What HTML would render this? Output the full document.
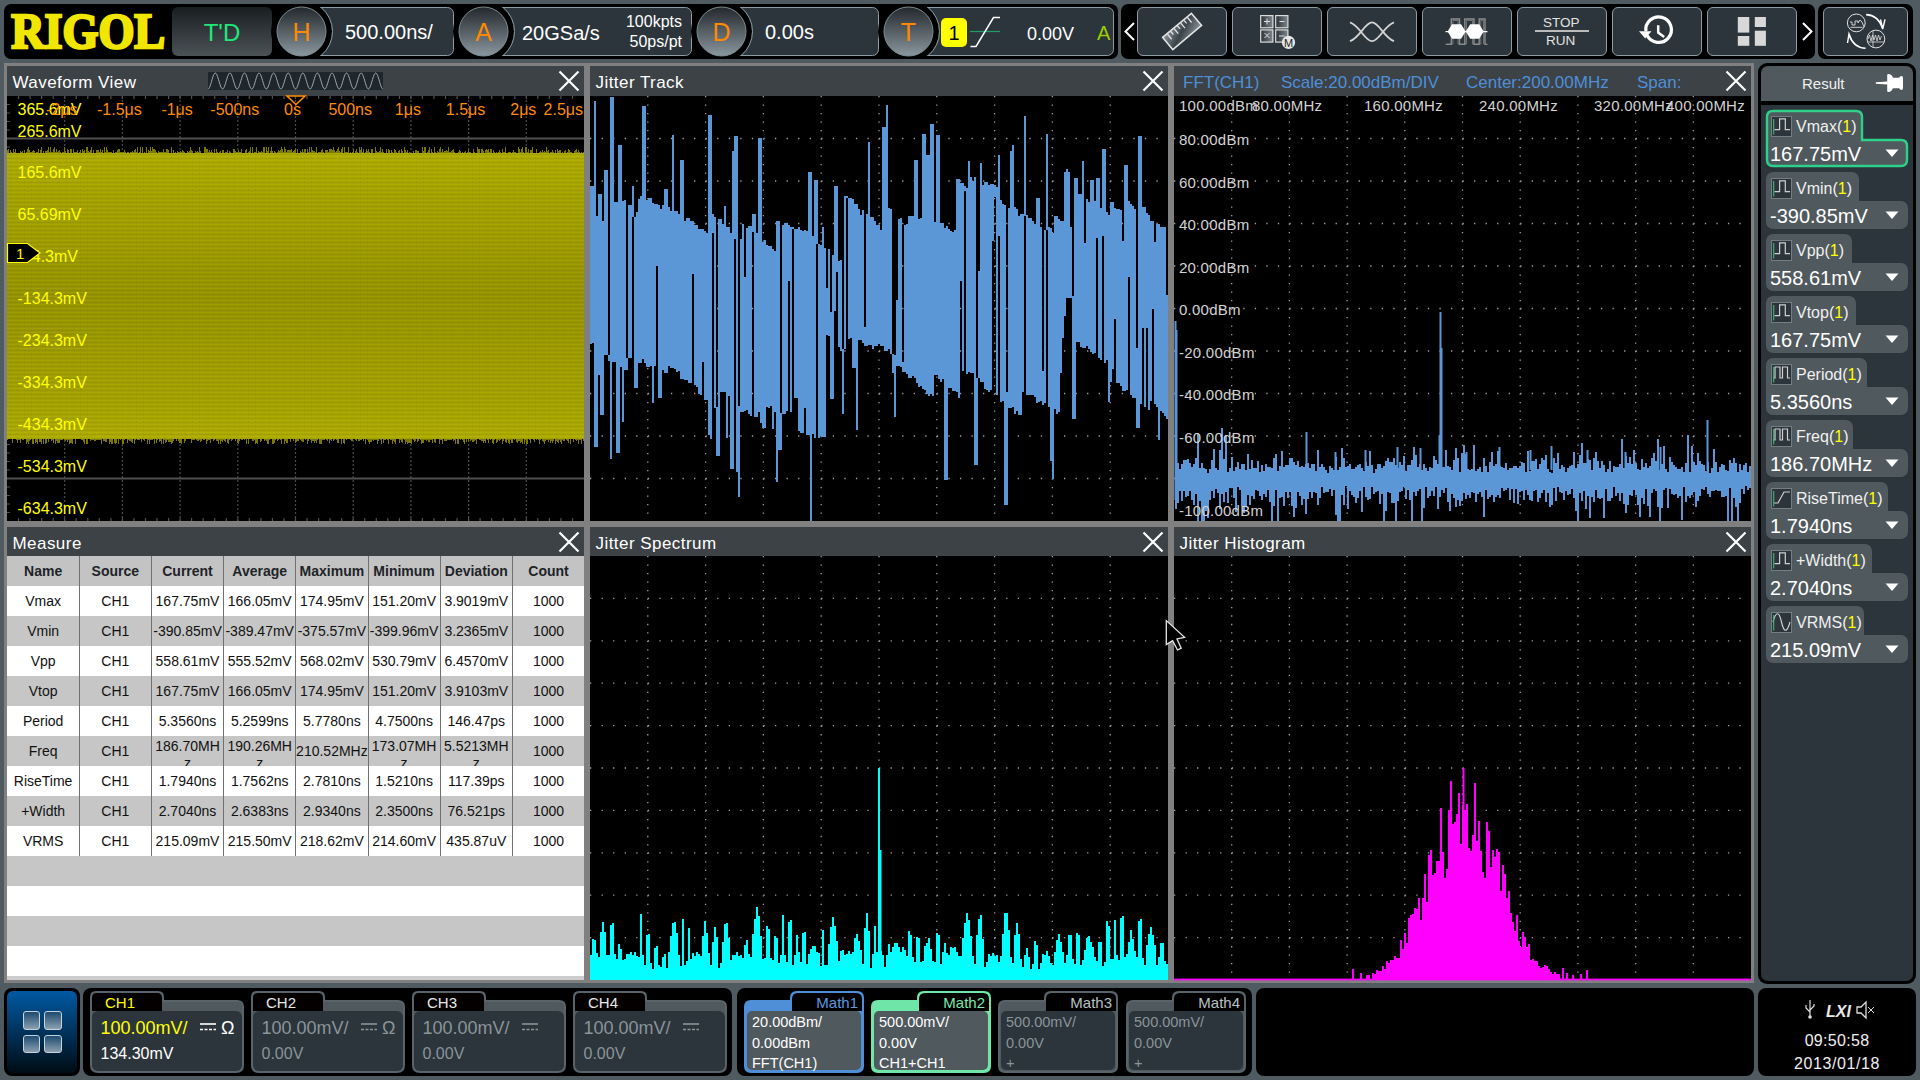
<!DOCTYPE html><html><head><meta charset="utf-8"><style>
*{margin:0;padding:0;box-sizing:border-box}
html,body{width:1920px;height:1080px;overflow:hidden;background:#4f5b61;font-family:"Liberation Sans",sans-serif;color:#fff}
.a{position:absolute}
.t{position:absolute;white-space:nowrap;line-height:1}
svg{position:absolute;overflow:visible}
</style></head><body>
<div class="a" style="left:4px;top:4px;width:1114px;height:55px;background:#000;border-radius:7px"></div>
<div class="a" style="left:1121px;top:4px;width:694px;height:55px;background:#000;border-radius:7px"></div>
<div class="a" style="left:1818px;top:4px;width:95px;height:55px;background:#000;border-radius:7px"></div>
<svg style="left:0;top:0" width="180" height="60"><text x="11.2" y="47.9" font-family="Liberation Serif" font-weight="bold" font-size="49.6" fill="#f0e600" stroke="#f0e600" stroke-width="2.6" stroke-linejoin="miter" textLength="154" lengthAdjust="spacingAndGlyphs">RIGOL</text></svg>
<div class="a" style="left:172px;top:7px;width:100px;height:49px;background:linear-gradient(#191d20,#4b5357);border-radius:6px"></div>
<div class="t" style="left:-78px;width:600px;text-align:center;top:20.7px;font-size:24px;color:#1ee87a;">T'D</div>
<svg style="left:0;top:0" width="1120" height="60">
<defs><linearGradient id="cg" x1="0" y1="0" x2="0" y2="1"><stop offset="0" stop-color="#23282c"/><stop offset="1" stop-color="#8a979e"/></linearGradient><clipPath id="bc"><rect x="0" y="7" width="1120" height="49"/></clipPath></defs>
<rect x="301.5" y="7.5" width="152.0" height="48" rx="6" fill="#2c353b" stroke="#8d9ca3" stroke-width="1"/>
<rect x="293.5" y="7" width="12" height="49" fill="#000"/>
<circle cx="301.5" cy="31.5" r="30.5" fill="#000" clip-path="url(#bc)"/>
<path d="M321.12 7.5 A31.0 31.0 0 0 1 321.12 55.5" fill="none" stroke="#8d9ca3" stroke-width="1"/>
<circle cx="301.5" cy="31.5" r="24.5" fill="url(#cg)" stroke="#7d8b92" stroke-width="1"/>
<text x="301.5" y="41" text-anchor="middle" font-family="Liberation Sans" font-size="25" fill="#ff8a00">H</text>
<rect x="483.5" y="7.5" width="208.0" height="48" rx="6" fill="#2c353b" stroke="#8d9ca3" stroke-width="1"/>
<rect x="475.5" y="7" width="12" height="49" fill="#000"/>
<circle cx="483.5" cy="31.5" r="30.5" fill="#000" clip-path="url(#bc)"/>
<path d="M503.12 7.5 A31.0 31.0 0 0 1 503.12 55.5" fill="none" stroke="#8d9ca3" stroke-width="1"/>
<circle cx="483.5" cy="31.5" r="24.5" fill="url(#cg)" stroke="#7d8b92" stroke-width="1"/>
<text x="483.5" y="41" text-anchor="middle" font-family="Liberation Sans" font-size="25" fill="#ff8a00">A</text>
<rect x="721.5" y="7.5" width="157.0" height="48" rx="6" fill="#2c353b" stroke="#8d9ca3" stroke-width="1"/>
<rect x="713.5" y="7" width="12" height="49" fill="#000"/>
<circle cx="721.5" cy="31.5" r="30.5" fill="#000" clip-path="url(#bc)"/>
<path d="M741.12 7.5 A31.0 31.0 0 0 1 741.12 55.5" fill="none" stroke="#8d9ca3" stroke-width="1"/>
<circle cx="721.5" cy="31.5" r="24.5" fill="url(#cg)" stroke="#7d8b92" stroke-width="1"/>
<text x="721.5" y="41" text-anchor="middle" font-family="Liberation Sans" font-size="25" fill="#ff8a00">D</text>
<rect x="908.5" y="7.5" width="205.0" height="48" rx="6" fill="#2c353b" stroke="#8d9ca3" stroke-width="1"/>
<rect x="900.5" y="7" width="12" height="49" fill="#000"/>
<circle cx="908.5" cy="31.5" r="30.5" fill="#000" clip-path="url(#bc)"/>
<path d="M928.12 7.5 A31.0 31.0 0 0 1 928.12 55.5" fill="none" stroke="#8d9ca3" stroke-width="1"/>
<circle cx="908.5" cy="31.5" r="24.5" fill="url(#cg)" stroke="#7d8b92" stroke-width="1"/>
<text x="908.5" y="41" text-anchor="middle" font-family="Liberation Sans" font-size="25" fill="#ff8a00">T</text>
</svg>
<div class="t" style="left:345px;top:22.1px;font-size:20px;color:#fff;">500.00ns/</div>
<div class="t" style="left:522px;top:23.1px;font-size:20px;color:#fff;">20GSa/s</div>
<div class="t" style="right:1238px;top:13.5px;font-size:16px;color:#fff;">100kpts</div>
<div class="t" style="right:1238px;top:33.7px;font-size:16px;color:#fff;">50ps/pt</div>
<div class="t" style="left:765px;top:22.1px;font-size:20px;color:#fff;">0.00s</div>
<div class="a" style="left:941px;top:17.5px;width:26px;height:29px;background:#ffff00;border-radius:5px"></div>
<div class="t" style="left:654px;width:600px;text-align:center;top:23.1px;font-size:20px;color:#000;">1</div>
<svg style="left:960;top:10" width="60" height="40"><line x1="10" y1="21.5" x2="40" y2="21.5" stroke="#1f9e6a" stroke-width="1.2"/><path d="M10.5 36.5 H16 L33.5 7.5 H40" fill="none" stroke="#fff" stroke-width="1.5"/></svg>
<div class="t" style="left:1027px;top:25.3px;font-size:18px;color:#fff;">0.00V</div>
<div class="t" style="left:1097px;top:23.1px;font-size:20px;color:#9acd00;">A</div>
<svg style="left:1120;top:18" width="20" height="28"><path d="M14 5 L5.5 13.5 L14 22" fill="none" stroke="#fff" stroke-width="2"/></svg>
<svg style="left:1798;top:18" width="20" height="28"><path d="M5 5 L13.5 13.5 L5 22" fill="none" stroke="#fff" stroke-width="2"/></svg>
<div class="a" style="left:1137px;top:7px;width:90px;height:49px;background:#2c353b;border:1px solid #8d9ca3;border-radius:6px"></div>
<div class="a" style="left:1232px;top:7px;width:90px;height:49px;background:#2c353b;border:1px solid #8d9ca3;border-radius:6px"></div>
<div class="a" style="left:1327px;top:7px;width:90px;height:49px;background:#2c353b;border:1px solid #8d9ca3;border-radius:6px"></div>
<div class="a" style="left:1422px;top:7px;width:90px;height:49px;background:#2c353b;border:1px solid #8d9ca3;border-radius:6px"></div>
<div class="a" style="left:1517px;top:7px;width:90px;height:49px;background:#2c353b;border:1px solid #8d9ca3;border-radius:6px"></div>
<div class="a" style="left:1612px;top:7px;width:90px;height:49px;background:#2c353b;border:1px solid #8d9ca3;border-radius:6px"></div>
<div class="a" style="left:1707px;top:7px;width:90px;height:49px;background:#2c353b;border:1px solid #8d9ca3;border-radius:6px"></div>
<div class="a" style="left:1823px;top:7px;width:85px;height:49px;background:#2c353b;border:1px solid #8d9ca3;border-radius:6px"></div>
<div class="t" style="left:1543px;top:15.5px;font-size:13.5px;color:#e4e4e4;">STOP</div>
<div class="a" style="left:1535px;top:30px;width:54px;height:2px;background:#bcbcbc"></div>
<div class="t" style="left:1546px;top:33.8px;font-size:13.5px;color:#e4e4e4;">RUN</div>
<svg style="left:0;top:0" width="1920" height="60"><defs>
<linearGradient id="rg" x1="0" y1="0" x2="1" y2="1"><stop offset="0" stop-color="#8a959b"/><stop offset="0.5" stop-color="#3a4348"/><stop offset="1" stop-color="#8a959b"/></linearGradient>
<linearGradient id="sg" x1="0" y1="0" x2="1" y2="0"><stop offset="0" stop-color="#2a3136"/><stop offset="1" stop-color="#7d888e"/></linearGradient>
</defs>
<g transform="translate(1182.1 31.4) rotate(-40)"><rect x="-18.8" y="-7.9" width="37.6" height="15.8" fill="url(#rg)" stroke="#e2e2e2" stroke-width="1.6"/><path d="M-13 -7.2 v6.5 M-8.7 -7.2 v4 M-4.4 -7.2 v6.5 M0 -7.2 v4 M4.3 -7.2 v6.5 M8.6 -7.2 v4 M13 -7.2 v6.5" stroke="#e2e2e2" stroke-width="1.3"/></g>
<rect x="1260.6999999999998" y="15.6" width="12.2" height="12.2" fill="url(#sg)" stroke="#dcdcdc" stroke-width="1.2"/>
<rect x="1275.6999999999998" y="15.6" width="12.2" height="12.2" fill="url(#sg)" stroke="#dcdcdc" stroke-width="1.2"/>
<rect x="1260.6999999999998" y="29.900000000000002" width="12.2" height="12.2" fill="url(#sg)" stroke="#dcdcdc" stroke-width="1.2"/>
<rect x="1275.6999999999998" y="29.900000000000002" width="12.2" height="12.2" fill="url(#sg)" stroke="#dcdcdc" stroke-width="1.2"/>
<path d="M1264 21.5 h6 M1267 18.5 v6 M1279.5 21.5 h5 M1264.5 33 l5 5 M1269.5 33 l-5 5 M1279 36 h5.5" stroke="#e0e0e0" stroke-width="1"/>
<circle cx="1288.5" cy="42.4" r="6.6" fill="#e8e8e8"/><text x="1288.5" y="46.6" text-anchor="middle" font-family="Liberation Sans" font-size="11" fill="#222">M</text>
<path d="M1350 22.4 C1360 26 1365 41.2 1372 41.2 C1379 41.2 1384 26 1394 22.4 M1350 41.2 C1360 37.6 1365 22.4 1372 22.4 C1379 22.4 1384 37.6 1394 41.2" fill="none" stroke="#d4d4d4" stroke-width="1.8"/>
<path d="M1445.6 44.4 H1451.3 V19 H1459.5 V44.4 H1464.8 V19 H1474 V44.4 H1479.2 V19 H1485 V44.4 H1487.5" fill="none" stroke="#8c8c8c" stroke-width="1.4"/>
<path d="M1447.2 44 H1453 V20.5 H1458 V44 H1466.5 V20.5 H1472.5 V44 H1480.8 V20.5 H1483.5 V44" fill="none" stroke="#8c8c8c" stroke-width="1" opacity="0.7"/>
<path d="M1445.5 31.6 H1487.5" stroke="#fff" stroke-width="1.2"/>
<path d="M1447.6 31.6 L1452.1 24.3 H1461.1 L1465.6 31.6 L1461.1 38.8 H1452.1 Z" fill="#fff"/>
<path d="M1465.7 31.6 L1470.2 24.3 H1479.2 L1483.7 31.6 L1479.2 38.8 H1470.2 Z" fill="#fff"/>
<path d="M1647.10 35.31 A12.8 12.8 0 1 0 1645.90 31.40" fill="none" stroke="#fff" stroke-width="3.2"/>
<path d="M1639 31.2 H1651.5 L1645.2 38.4 Z" fill="#fff"/>
<path d="M1658.2 25.3 V32.5 L1664.2 36.9" fill="none" stroke="#fff" stroke-width="2.5"/>
<rect x="1737.8" y="17" width="11.5" height="15.6" fill="#d8d8d8"/><rect x="1737.8" y="36" width="11.5" height="9.8" fill="#d8d8d8"/><rect x="1754.8" y="17" width="11.1" height="10" fill="#d8d8d8"/><rect x="1754.8" y="30.7" width="11.1" height="15.1" fill="#d8d8d8"/>
<circle cx="1856.3" cy="22.9" r="8.9" fill="none" stroke="#e0e0e0" stroke-width="1"/><circle cx="1875.9" cy="39" r="8.9" fill="none" stroke="#e0e0e0" stroke-width="1"/>
<path d="M1850 22 h2 v3 h3 v-4 h3 v2 l2 -3 l2 2 l2 5 M1850.5 27.3 H1862.5" fill="none" stroke="#e0e0e0" stroke-width="0.9"/>
<path d="M1868 39 l1.5 -4 l1.5 6 l1.5 -6 l1.5 5 l1.5 -5 l1.5 6 l1.5 -6 l1.5 5 l1.5 -4 M1873 30.5 V47.5 M1868 42 H1884" fill="none" stroke="#e0e0e0" stroke-width="0.8"/>
<path d="M1866.1 14.6 Q1878 15 1882.5 28" fill="none" stroke="#fff" stroke-width="1.6"/><path d="M1880.5 19.5 L1882.7 29 L1885 19.3" fill="none" stroke="#fff" stroke-width="1.4"/>
<path d="M1865.6 48.3 Q1854 48 1849 35" fill="none" stroke="#fff" stroke-width="1.6"/><path d="M1847.5 43 L1849 33.8 L1851.5 40" fill="none" stroke="#fff" stroke-width="1.4"/>
</svg>
<div class="a" style="left:4px;top:63px;width:1750px;height:920px;background:#808080"></div>
<div class="a" style="left:7px;top:66px;width:577px;height:30px;background:#3c4246"></div>
<div class="a" style="left:7px;top:96px;width:577px;height:425px;background:#000"></div>
<svg style="left:558px;top:70px" width="22" height="22"><path d="M1.5 1.5 L20.5 20.5 M20.5 1.5 L1.5 20.5" stroke="#fff" stroke-width="2.2"/></svg>
<div class="a" style="left:7px;top:527px;width:577px;height:29px;background:#3c4246"></div>
<div class="a" style="left:7px;top:556px;width:577px;height:424px;background:#000"></div>
<svg style="left:558px;top:531px" width="22" height="22"><path d="M1.5 1.5 L20.5 20.5 M20.5 1.5 L1.5 20.5" stroke="#fff" stroke-width="2.2"/></svg>
<div class="a" style="left:590px;top:66px;width:578px;height:30px;background:#3c4246"></div>
<div class="a" style="left:590px;top:96px;width:578px;height:425px;background:#000"></div>
<svg style="left:1142px;top:70px" width="22" height="22"><path d="M1.5 1.5 L20.5 20.5 M20.5 1.5 L1.5 20.5" stroke="#fff" stroke-width="2.2"/></svg>
<div class="a" style="left:590px;top:527px;width:578px;height:29px;background:#3c4246"></div>
<div class="a" style="left:590px;top:556px;width:578px;height:424px;background:#000"></div>
<svg style="left:1142px;top:531px" width="22" height="22"><path d="M1.5 1.5 L20.5 20.5 M20.5 1.5 L1.5 20.5" stroke="#fff" stroke-width="2.2"/></svg>
<div class="a" style="left:1174px;top:66px;width:577px;height:30px;background:#3c4246"></div>
<div class="a" style="left:1174px;top:96px;width:577px;height:425px;background:#000"></div>
<svg style="left:1725px;top:70px" width="22" height="22"><path d="M1.5 1.5 L20.5 20.5 M20.5 1.5 L1.5 20.5" stroke="#fff" stroke-width="2.2"/></svg>
<div class="a" style="left:1174px;top:527px;width:577px;height:29px;background:#3c4246"></div>
<div class="a" style="left:1174px;top:556px;width:577px;height:424px;background:#000"></div>
<svg style="left:1725px;top:531px" width="22" height="22"><path d="M1.5 1.5 L20.5 20.5 M20.5 1.5 L1.5 20.5" stroke="#fff" stroke-width="2.2"/></svg>
<div class="t" style="left:12.5px;top:73.6px;font-size:17px;color:#fff;letter-spacing:0.45px">Waveform View</div>
<div class="t" style="left:595.5px;top:73.6px;font-size:17px;color:#fff;letter-spacing:0.45px">Jitter Track</div>
<div class="t" style="left:12.5px;top:534.6px;font-size:17px;color:#fff;letter-spacing:0.45px">Measure</div>
<div class="t" style="left:595.5px;top:534.6px;font-size:17px;color:#fff;letter-spacing:0.45px">Jitter Spectrum</div>
<div class="t" style="left:1179.5px;top:534.6px;font-size:17px;color:#fff;letter-spacing:0.45px">Jitter Histogram</div>
<div class="t" style="left:1183px;top:73.6px;font-size:17px;color:#4f8fd8;">FFT(CH1)</div>
<div class="t" style="left:1281px;top:73.6px;font-size:17px;color:#4f8fd8;">Scale:20.00dBm/DIV</div>
<div class="t" style="left:1466px;top:73.6px;font-size:17px;color:#4f8fd8;">Center:200.00MHz</div>
<div class="t" style="left:1637px;top:73.6px;font-size:17px;color:#4f8fd8;">Span:</div>
<svg style="left:0;top:0" width="600" height="530">
<rect x="208" y="72" width="175" height="18" fill="#1e282c"/>
<polyline points="208.0,89.0 208.5,88.8 209.0,88.3 209.5,87.4 210.0,86.2 210.5,84.8 211.0,83.2 211.5,81.5 212.0,79.8 212.5,78.1 213.0,76.6 213.5,75.3 214.0,74.2 214.5,73.5 215.0,73.1 215.5,73.0 216.0,73.4 216.5,74.1 217.0,75.1 217.5,76.4 218.0,77.9 218.5,79.5 219.0,81.2 219.5,82.9 220.0,84.5 220.5,86.0 221.0,87.2 221.5,88.1 222.0,88.7 222.5,89.0 223.0,88.9 223.5,88.4 224.0,87.6 224.5,86.4 225.0,85.0 225.5,83.5 226.0,81.8 226.5,80.1 227.0,78.4 227.5,76.8 228.0,75.5 228.5,74.4 229.0,73.6 229.5,73.1 230.0,73.0 230.5,73.3 231.0,73.9 231.5,74.9 232.0,76.1 232.5,77.6 233.0,79.2 233.5,80.9 234.0,82.6 234.5,84.3 235.0,85.8 235.5,87.0 236.0,88.0 236.5,88.7 237.0,89.0 237.5,88.9 238.0,88.5 238.5,87.7 239.0,86.6 239.5,85.3 240.0,83.7 240.5,82.1 241.0,80.4 241.5,78.7 242.0,77.1 242.5,75.7 243.0,74.5 243.5,73.7 244.0,73.2 244.5,73.0 245.0,73.2 245.5,73.8 246.0,74.7 246.5,75.9 247.0,77.3 247.5,78.9 248.0,80.6 248.5,82.4 249.0,84.0 249.5,85.5 250.0,86.8 250.5,87.9 251.0,88.6 251.5,89.0 252.0,89.0 252.5,88.6 253.0,87.9 253.5,86.8 254.0,85.5 254.5,84.0 255.0,82.4 255.5,80.6 256.0,78.9 256.5,77.3 257.0,75.9 257.5,74.7 258.0,73.8 258.5,73.2 259.0,73.0 259.5,73.2 260.0,73.7 260.5,74.5 261.0,75.7 261.5,77.1 262.0,78.7 262.5,80.4 263.0,82.1 263.5,83.7 264.0,85.3 264.5,86.6 265.0,87.7 265.5,88.5 266.0,88.9 266.5,89.0 267.0,88.7 267.5,88.0 268.0,87.0 268.5,85.8 269.0,84.3 269.5,82.6 270.0,80.9 270.5,79.2 271.0,77.6 271.5,76.1 272.0,74.9 272.5,73.9 273.0,73.3 273.5,73.0 274.0,73.1 274.5,73.6 275.0,74.4 275.5,75.5 276.0,76.8 276.5,78.4 277.0,80.1 277.5,81.8 278.0,83.5 278.5,85.0 279.0,86.4 279.5,87.6 280.0,88.4 280.5,88.9 281.0,89.0 281.5,88.7 282.0,88.1 282.5,87.2 283.0,86.0 283.5,84.5 284.0,82.9 284.5,81.2 285.0,79.5 285.5,77.9 286.0,76.4 286.5,75.1 287.0,74.1 287.5,73.4 288.0,73.0 288.5,73.1 289.0,73.5 289.5,74.2 290.0,75.3 290.5,76.6 291.0,78.1 291.5,79.8 292.0,81.5 292.5,83.2 293.0,84.8 293.5,86.2 294.0,87.4 294.5,88.3 295.0,88.8 295.5,89.0 296.0,88.8 296.5,88.3 297.0,87.4 297.5,86.2 298.0,84.8 298.5,83.2 299.0,81.5 299.5,79.8 300.0,78.1 300.5,76.6 301.0,75.3 301.5,74.2 302.0,73.5 302.5,73.1 303.0,73.0 303.5,73.4 304.0,74.1 304.5,75.1 305.0,76.4 305.5,77.9 306.0,79.5 306.5,81.2 307.0,82.9 307.5,84.5 308.0,86.0 308.5,87.2 309.0,88.1 309.5,88.7 310.0,89.0 310.5,88.9 311.0,88.4 311.5,87.6 312.0,86.4 312.5,85.0 313.0,83.5 313.5,81.8 314.0,80.1 314.5,78.4 315.0,76.8 315.5,75.5 316.0,74.4 316.5,73.6 317.0,73.1 317.5,73.0 318.0,73.3 318.5,73.9 319.0,74.9 319.5,76.1 320.0,77.6 320.5,79.2 321.0,80.9 321.5,82.6 322.0,84.3 322.5,85.8 323.0,87.0 323.5,88.0 324.0,88.7 324.5,89.0 325.0,88.9 325.5,88.5 326.0,87.7 326.5,86.6 327.0,85.3 327.5,83.7 328.0,82.1 328.5,80.4 329.0,78.7 329.5,77.1 330.0,75.7 330.5,74.5 331.0,73.7 331.5,73.2 332.0,73.0 332.5,73.2 333.0,73.8 333.5,74.7 334.0,75.9 334.5,77.3 335.0,78.9 335.5,80.6 336.0,82.4 336.5,84.0 337.0,85.5 337.5,86.8 338.0,87.9 338.5,88.6 339.0,89.0 339.5,89.0 340.0,88.6 340.5,87.9 341.0,86.8 341.5,85.5 342.0,84.0 342.5,82.4 343.0,80.6 343.5,78.9 344.0,77.3 344.5,75.9 345.0,74.7 345.5,73.8 346.0,73.2 346.5,73.0 347.0,73.2 347.5,73.7 348.0,74.5 348.5,75.7 349.0,77.1 349.5,78.7 350.0,80.4 350.5,82.1 351.0,83.7 351.5,85.3 352.0,86.6 352.5,87.7 353.0,88.5 353.5,88.9 354.0,89.0 354.5,88.7 355.0,88.0 355.5,87.0 356.0,85.8 356.5,84.3 357.0,82.6 357.5,80.9 358.0,79.2 358.5,77.6 359.0,76.1 359.5,74.9 360.0,73.9 360.5,73.3 361.0,73.0 361.5,73.1 362.0,73.6 362.5,74.4 363.0,75.5 363.5,76.8 364.0,78.4 364.5,80.1 365.0,81.8 365.5,83.5 366.0,85.0 366.5,86.4 367.0,87.6 367.5,88.4 368.0,88.9 368.5,89.0 369.0,88.7 369.5,88.1 370.0,87.2 370.5,86.0 371.0,84.5 371.5,82.9 372.0,81.2 372.5,79.5 373.0,77.9 373.5,76.4 374.0,75.1 374.5,74.1 375.0,73.4 375.5,73.0 376.0,73.1 376.5,73.5 377.0,74.2 377.5,75.3 378.0,76.6 378.5,78.1 379.0,79.8 379.5,81.5 380.0,83.2 380.5,84.8 381.0,86.2 381.5,87.4 382.0,88.3 382.5,88.8 383.0,89.0" fill="none" stroke="#b4b4b4" stroke-width="0.9"/>
<path d="M64.7 96 V521 M122.4 96 V521 M180.1 96 V521 M237.8 96 V521 M295.5 96 V521 M353.2 96 V521 M410.9 96 V521 M468.6 96 V521 M526.3 96 V521" stroke="#4a4a4a" stroke-width="1.2" stroke-dasharray="2 2" fill="none"/>
<line x1="7" y1="138.5" x2="584" y2="138.5" stroke="#4e4e4e" stroke-width="2"/>
<line x1="7" y1="478.5" x2="584" y2="478.5" stroke="#4e4e4e" stroke-width="2"/>
<path d="M18.5 96 v3 M18.5 521 v-3 M30.1 96 v3 M30.1 521 v-3 M41.6 96 v3 M41.6 521 v-3 M53.2 96 v3 M53.2 521 v-3 M64.7 96 v3 M64.7 521 v-3 M76.2 96 v3 M76.2 521 v-3 M87.8 96 v3 M87.8 521 v-3 M99.3 96 v3 M99.3 521 v-3 M110.9 96 v3 M110.9 521 v-3 M122.4 96 v3 M122.4 521 v-3 M133.9 96 v3 M133.9 521 v-3 M145.5 96 v3 M145.5 521 v-3 M157.0 96 v3 M157.0 521 v-3 M168.6 96 v3 M168.6 521 v-3 M180.1 96 v3 M180.1 521 v-3 M191.6 96 v3 M191.6 521 v-3 M203.2 96 v3 M203.2 521 v-3 M214.7 96 v3 M214.7 521 v-3 M226.3 96 v3 M226.3 521 v-3 M237.8 96 v3 M237.8 521 v-3 M249.3 96 v3 M249.3 521 v-3 M260.9 96 v3 M260.9 521 v-3 M272.4 96 v3 M272.4 521 v-3 M284.0 96 v3 M284.0 521 v-3 M295.5 96 v3 M295.5 521 v-3 M307.0 96 v3 M307.0 521 v-3 M318.6 96 v3 M318.6 521 v-3 M330.1 96 v3 M330.1 521 v-3 M341.7 96 v3 M341.7 521 v-3 M353.2 96 v3 M353.2 521 v-3 M364.7 96 v3 M364.7 521 v-3 M376.3 96 v3 M376.3 521 v-3 M387.8 96 v3 M387.8 521 v-3 M399.4 96 v3 M399.4 521 v-3 M410.9 96 v3 M410.9 521 v-3 M422.4 96 v3 M422.4 521 v-3 M434.0 96 v3 M434.0 521 v-3 M445.5 96 v3 M445.5 521 v-3 M457.1 96 v3 M457.1 521 v-3 M468.6 96 v3 M468.6 521 v-3 M480.1 96 v3 M480.1 521 v-3 M491.7 96 v3 M491.7 521 v-3 M503.2 96 v3 M503.2 521 v-3 M514.8 96 v3 M514.8 521 v-3 M526.3 96 v3 M526.3 521 v-3 M537.8 96 v3 M537.8 521 v-3 M549.4 96 v3 M549.4 521 v-3 M560.9 96 v3 M560.9 521 v-3 M572.5 96 v3 M572.5 521 v-3 M7 104.5 h3 M7 113.0 h3 M7 121.5 h3 M7 130.0 h3 M7 138.5 h3 M7 147.0 h3 M7 155.5 h3 M7 164.0 h3 M7 172.5 h3 M7 181.0 h3 M7 189.5 h3 M7 198.0 h3 M7 206.5 h3 M7 215.0 h3 M7 223.5 h3 M7 232.0 h3 M7 240.5 h3 M7 249.0 h3 M7 257.5 h3 M7 266.0 h3 M7 274.5 h3 M7 283.0 h3 M7 291.5 h3 M7 300.0 h3 M7 308.5 h3 M7 317.0 h3 M7 325.5 h3 M7 334.0 h3 M7 342.5 h3 M7 351.0 h3 M7 359.5 h3 M7 368.0 h3 M7 376.5 h3 M7 385.0 h3 M7 393.5 h3 M7 402.0 h3 M7 410.5 h3 M7 419.0 h3 M7 427.5 h3 M7 436.0 h3 M7 444.5 h3 M7 453.0 h3 M7 461.5 h3 M7 470.0 h3 M7 478.5 h3 M7 487.0 h3 M7 495.5 h3 M7 504.0 h3 M7 512.5 h3" stroke="#505050" stroke-width="1.2" fill="none"/>
<defs><linearGradient id="yg" x1="0" y1="0" x2="0" y2="1"><stop offset="0" stop-color="#aeac00"/><stop offset="0.12" stop-color="#a6a400"/><stop offset="0.5" stop-color="#959300"/><stop offset="0.88" stop-color="#a4a200"/><stop offset="1" stop-color="#adab00"/></linearGradient><pattern id="ys" width="7" height="4" patternUnits="userSpaceOnUse"><rect y="0" width="7" height="1" fill="#d0d000" opacity="0.13"/><rect y="2" width="7" height="1" fill="#000" opacity="0.06"/><rect x="3" y="1" width="1" height="1" fill="#000" opacity="0.08"/></pattern></defs>
<rect x="7" y="153" width="577" height="286" fill="url(#yg)"/>
<rect x="7" y="153" width="577" height="286" fill="url(#ys)"/>
<path d="M7.5 150 V153 M7.5 439 V440 M8.5 149 V153 M10.5 150 V153 M11.5 152 V153 M12.5 439 V443 M13.5 149 V153 M14.5 152 V153 M15.5 149 V153 M16.5 439 V440 M17.5 439 V443 M18.5 439 V440 M19.5 439 V440 M20.5 151 V153 M20.5 439 V443 M21.5 152 V153 M22.5 151 V153 M22.5 439 V440 M23.5 439 V440 M24.5 150 V153 M26.5 152 V153 M26.5 439 V444 M27.5 149 V153 M27.5 439 V442 M28.5 147 V153 M28.5 439 V444 M29.5 150 V153 M29.5 439 V441 M30.5 152 V153 M30.5 439 V440 M31.5 152 V153 M32.5 151 V153 M32.5 439 V444 M33.5 150 V153 M33.5 439 V444 M34.5 151 V153 M35.5 439 V443 M36.5 152 V153 M36.5 439 V442 M37.5 152 V153 M37.5 439 V444 M38.5 149 V153 M39.5 439 V442 M40.5 150 V153 M40.5 439 V442 M41.5 147 V153 M41.5 439 V444 M43.5 151 V153 M43.5 439 V444 M45.5 151 V153 M45.5 439 V444 M46.5 151 V153 M46.5 439 V443 M47.5 150 V153 M48.5 147 V153 M48.5 439 V442 M49.5 152 V153 M50.5 147 V153 M51.5 152 V153 M51.5 439 V441 M52.5 152 V153 M52.5 439 V440 M53.5 149 V153 M53.5 439 V443 M54.5 147 V153 M55.5 152 V153 M55.5 439 V444 M56.5 149 V153 M56.5 439 V441 M57.5 152 V153 M57.5 439 V443 M58.5 151 V153 M58.5 439 V443 M59.5 150 V153 M59.5 439 V443 M60.5 152 V153 M60.5 439 V440 M61.5 439 V440 M62.5 152 V153 M62.5 439 V440 M63.5 152 V153 M64.5 147 V153 M64.5 439 V440 M65.5 151 V153 M65.5 439 V441 M66.5 439 V440 M67.5 149 V153 M67.5 439 V442 M68.5 150 V153 M68.5 439 V440 M69.5 439 V444 M70.5 149 V153 M70.5 439 V443 M71.5 149 V153 M71.5 439 V443 M72.5 439 V444 M73.5 149 V153 M74.5 152 V153 M75.5 152 V153 M75.5 439 V444 M76.5 152 V153 M77.5 150 V153 M79.5 152 V153 M80.5 150 V153 M81.5 439 V440 M82.5 149 V153 M82.5 439 V440 M83.5 151 V153 M83.5 439 V442 M84.5 150 V153 M84.5 439 V444 M86.5 147 V153 M86.5 439 V444 M87.5 147 V153 M87.5 439 V444 M88.5 151 V153 M89.5 152 V153 M90.5 150 V153 M90.5 439 V441 M91.5 147 V153 M91.5 439 V440 M92.5 439 V440 M93.5 150 V153 M93.5 439 V440 M94.5 439 V441 M95.5 439 V441 M96.5 150 V153 M96.5 439 V440 M97.5 150 V153 M97.5 439 V440 M98.5 150 V153 M98.5 439 V440 M99.5 152 V153 M99.5 439 V440 M100.5 149 V153 M100.5 439 V440 M101.5 152 V153 M101.5 439 V444 M102.5 150 V153 M103.5 439 V441 M104.5 147 V153 M104.5 439 V441 M105.5 152 V153 M105.5 439 V442 M106.5 147 V153 M106.5 439 V442 M107.5 150 V153 M108.5 152 V153 M109.5 152 V153 M109.5 439 V444 M110.5 152 V153 M110.5 439 V442 M111.5 152 V153 M111.5 439 V444 M112.5 439 V444 M113.5 150 V153 M114.5 439 V443 M115.5 152 V153 M115.5 439 V444 M116.5 152 V153 M116.5 439 V443 M117.5 150 V153 M118.5 149 V153 M118.5 439 V444 M119.5 149 V153 M120.5 152 V153 M120.5 439 V440 M121.5 152 V153 M122.5 152 V153 M122.5 439 V444 M123.5 152 V153 M123.5 439 V444 M124.5 150 V153 M124.5 439 V440 M125.5 152 V153 M127.5 152 V153 M127.5 439 V443 M128.5 152 V153 M128.5 439 V440 M129.5 439 V441 M130.5 152 V153 M130.5 439 V441 M131.5 152 V153 M131.5 439 V442 M132.5 151 V153 M132.5 439 V443 M133.5 152 V153 M134.5 150 V153 M134.5 439 V444 M135.5 149 V153 M135.5 439 V440 M136.5 152 V153 M137.5 147 V153 M137.5 439 V440 M138.5 439 V440 M139.5 152 V153 M139.5 439 V440 M140.5 147 V153 M141.5 439 V442 M142.5 147 V153 M143.5 439 V440 M144.5 152 V153 M144.5 439 V441 M146.5 147 V153 M147.5 439 V444 M148.5 150 V153 M148.5 439 V440 M149.5 151 V153 M149.5 439 V444 M150.5 147 V153 M150.5 439 V440 M151.5 151 V153 M151.5 439 V440 M152.5 147 V153 M152.5 439 V440 M153.5 149 V153 M154.5 149 V153 M154.5 439 V444 M155.5 150 V153 M156.5 152 V153 M156.5 439 V443 M157.5 439 V440 M158.5 151 V153 M159.5 152 V153 M159.5 439 V442 M160.5 152 V153 M160.5 439 V441 M161.5 152 V153 M161.5 439 V444 M162.5 152 V153 M163.5 149 V153 M163.5 439 V444 M164.5 152 V153 M164.5 439 V440 M165.5 152 V153 M165.5 439 V443 M166.5 149 V153 M166.5 439 V442 M167.5 149 V153 M167.5 439 V440 M168.5 150 V153 M168.5 439 V442 M169.5 439 V442 M170.5 439 V442 M171.5 147 V153 M171.5 439 V444 M172.5 439 V443 M173.5 150 V153 M173.5 439 V441 M175.5 152 V153 M176.5 439 V441 M177.5 151 V153 M178.5 152 V153 M178.5 439 V441 M179.5 152 V153 M179.5 439 V443 M180.5 151 V153 M180.5 439 V443 M181.5 152 V153 M181.5 439 V444 M182.5 150 V153 M183.5 151 V153 M184.5 152 V153 M184.5 439 V443 M185.5 439 V441 M187.5 151 V153 M188.5 152 V153 M189.5 151 V153 M190.5 147 V153 M191.5 150 V153 M191.5 439 V443 M192.5 151 V153 M192.5 439 V440 M193.5 439 V440 M194.5 439 V440 M195.5 151 V153 M196.5 152 V153 M196.5 439 V440 M197.5 151 V153 M197.5 439 V441 M198.5 152 V153 M198.5 439 V441 M199.5 147 V153 M199.5 439 V440 M200.5 151 V153 M200.5 439 V442 M201.5 439 V441 M203.5 439 V440 M204.5 147 V153 M204.5 439 V440 M205.5 147 V153 M206.5 149 V153 M206.5 439 V444 M207.5 149 V153 M207.5 439 V441 M208.5 152 V153 M208.5 439 V440 M209.5 150 V153 M209.5 439 V440 M210.5 152 V153 M210.5 439 V443 M211.5 150 V153 M212.5 152 V153 M213.5 439 V441 M214.5 149 V153 M214.5 439 V440 M216.5 149 V153 M216.5 439 V441 M217.5 152 V153 M217.5 439 V441 M218.5 439 V444 M219.5 152 V153 M219.5 439 V440 M220.5 151 V153 M220.5 439 V444 M221.5 439 V441 M222.5 150 V153 M222.5 439 V442 M223.5 150 V153 M223.5 439 V440 M224.5 439 V441 M225.5 152 V153 M225.5 439 V442 M226.5 152 V153 M227.5 150 V153 M227.5 439 V443 M228.5 439 V444 M229.5 151 V153 M229.5 439 V440 M230.5 152 V153 M231.5 439 V441 M232.5 439 V440 M233.5 149 V153 M234.5 149 V153 M235.5 151 V153 M235.5 439 V441 M236.5 152 V153 M237.5 152 V153 M237.5 439 V443 M238.5 150 V153 M238.5 439 V444 M239.5 152 V153 M239.5 439 V441 M240.5 152 V153 M241.5 149 V153 M241.5 439 V440 M242.5 439 V440 M244.5 439 V440 M245.5 150 V153 M246.5 149 V153 M246.5 439 V444 M248.5 152 V153 M248.5 439 V444 M249.5 151 V153 M250.5 147 V153 M252.5 147 V153 M252.5 439 V441 M253.5 439 V441 M254.5 152 V153 M254.5 439 V440 M255.5 152 V153 M255.5 439 V444 M256.5 147 V153 M256.5 439 V443 M257.5 439 V444 M258.5 151 V153 M259.5 152 V153 M260.5 152 V153 M260.5 439 V442 M261.5 151 V153 M261.5 439 V441 M262.5 152 V153 M263.5 147 V153 M264.5 147 V153 M264.5 439 V441 M265.5 439 V440 M266.5 147 V153 M266.5 439 V441 M267.5 151 V153 M267.5 439 V444 M268.5 147 V153 M268.5 439 V444 M269.5 439 V440 M270.5 151 V153 M271.5 147 V153 M272.5 151 V153 M272.5 439 V444 M273.5 439 V444 M274.5 151 V153 M274.5 439 V443 M275.5 152 V153 M275.5 439 V440 M277.5 152 V153 M277.5 439 V441 M278.5 150 V153 M278.5 439 V440 M279.5 151 V153 M280.5 150 V153 M280.5 439 V440 M281.5 147 V153 M281.5 439 V444 M282.5 149 V153 M283.5 152 V153 M284.5 147 V153 M284.5 439 V444 M285.5 149 V153 M285.5 439 V441 M286.5 152 V153 M286.5 439 V443 M287.5 150 V153 M287.5 439 V443 M288.5 150 V153 M289.5 150 V153 M290.5 150 V153 M290.5 439 V442 M291.5 149 V153 M292.5 152 V153 M293.5 151 V153 M293.5 439 V441 M294.5 150 V153 M295.5 149 V153 M295.5 439 V443 M296.5 439 V442 M297.5 149 V153 M297.5 439 V441 M298.5 439 V441 M300.5 151 V153 M300.5 439 V440 M301.5 152 V153 M301.5 439 V441 M302.5 149 V153 M302.5 439 V442 M303.5 152 V153 M303.5 439 V442 M304.5 149 V153 M305.5 149 V153 M305.5 439 V440 M307.5 149 V153 M307.5 439 V444 M308.5 152 V153 M308.5 439 V441 M309.5 147 V153 M310.5 152 V153 M310.5 439 V440 M311.5 147 V153 M311.5 439 V443 M312.5 150 V153 M312.5 439 V441 M313.5 151 V153 M313.5 439 V441 M314.5 151 V153 M314.5 439 V443 M315.5 152 V153 M315.5 439 V441 M316.5 147 V153 M316.5 439 V443 M317.5 439 V440 M318.5 152 V153 M319.5 152 V153 M319.5 439 V444 M320.5 152 V153 M320.5 439 V444 M321.5 150 V153 M321.5 439 V444 M322.5 149 V153 M322.5 439 V440 M323.5 152 V153 M323.5 439 V440 M324.5 439 V440 M325.5 150 V153 M326.5 150 V153 M326.5 439 V440 M327.5 150 V153 M327.5 439 V441 M328.5 152 V153 M329.5 149 V153 M329.5 439 V443 M330.5 149 V153 M330.5 439 V440 M331.5 149 V153 M331.5 439 V441 M332.5 150 V153 M333.5 147 V153 M333.5 439 V441 M334.5 150 V153 M334.5 439 V440 M335.5 152 V153 M336.5 151 V153 M336.5 439 V440 M337.5 149 V153 M337.5 439 V443 M338.5 147 V153 M338.5 439 V443 M339.5 151 V153 M340.5 152 V153 M341.5 149 V153 M341.5 439 V444 M342.5 147 V153 M343.5 439 V443 M344.5 147 V153 M344.5 439 V444 M345.5 152 V153 M346.5 152 V153 M346.5 439 V440 M347.5 152 V153 M348.5 147 V153 M350.5 152 V153 M350.5 439 V440 M351.5 439 V441 M352.5 152 V153 M352.5 439 V441 M353.5 149 V153 M355.5 151 V153 M355.5 439 V440 M356.5 149 V153 M356.5 439 V441 M357.5 152 V153 M358.5 439 V441 M359.5 147 V153 M359.5 439 V441 M360.5 150 V153 M360.5 439 V440 M361.5 147 V153 M361.5 439 V440 M362.5 152 V153 M363.5 149 V153 M363.5 439 V441 M365.5 152 V153 M365.5 439 V444 M366.5 149 V153 M367.5 151 V153 M367.5 439 V440 M368.5 149 V153 M368.5 439 V442 M369.5 152 V153 M369.5 439 V444 M370.5 439 V442 M371.5 149 V153 M371.5 439 V442 M372.5 149 V153 M372.5 439 V440 M373.5 439 V441 M374.5 439 V440 M375.5 147 V153 M375.5 439 V440 M376.5 151 V153 M376.5 439 V440 M377.5 152 V153 M377.5 439 V444 M378.5 152 V153 M378.5 439 V441 M379.5 151 V153 M380.5 147 V153 M380.5 439 V440 M381.5 152 V153 M381.5 439 V444 M382.5 149 V153 M383.5 152 V153 M383.5 439 V443 M384.5 439 V440 M385.5 439 V440 M386.5 149 V153 M387.5 439 V440 M388.5 149 V153 M388.5 439 V444 M389.5 150 V153 M390.5 439 V440 M391.5 150 V153 M391.5 439 V440 M392.5 152 V153 M392.5 439 V444 M393.5 439 V441 M394.5 149 V153 M394.5 439 V442 M395.5 150 V153 M395.5 439 V444 M396.5 152 V153 M398.5 151 V153 M399.5 150 V153 M399.5 439 V443 M400.5 439 V440 M401.5 149 V153 M401.5 439 V442 M402.5 151 V153 M402.5 439 V443 M404.5 147 V153 M404.5 439 V440 M405.5 150 V153 M405.5 439 V444 M406.5 152 V153 M406.5 439 V442 M407.5 150 V153 M407.5 439 V444 M408.5 439 V443 M409.5 152 V153 M409.5 439 V443 M410.5 439 V443 M411.5 439 V444 M413.5 151 V153 M413.5 439 V440 M414.5 439 V442 M415.5 150 V153 M415.5 439 V441 M416.5 150 V153 M417.5 151 V153 M417.5 439 V442 M418.5 151 V153 M418.5 439 V441 M420.5 439 V440 M421.5 439 V444 M422.5 147 V153 M422.5 439 V443 M423.5 151 V153 M423.5 439 V443 M424.5 147 V153 M424.5 439 V440 M425.5 147 V153 M425.5 439 V440 M426.5 439 V441 M427.5 152 V153 M427.5 439 V440 M428.5 150 V153 M428.5 439 V442 M429.5 147 V153 M429.5 439 V442 M430.5 439 V440 M431.5 149 V153 M431.5 439 V440 M432.5 152 V153 M432.5 439 V443 M434.5 147 V153 M434.5 439 V442 M435.5 152 V153 M435.5 439 V443 M437.5 151 V153 M438.5 152 V153 M439.5 149 V153 M439.5 439 V444 M440.5 147 V153 M440.5 439 V440 M441.5 152 V153 M441.5 439 V440 M442.5 149 V153 M442.5 439 V444 M443.5 152 V153 M444.5 151 V153 M444.5 439 V441 M445.5 151 V153 M445.5 439 V441 M446.5 150 V153 M446.5 439 V441 M447.5 151 V153 M447.5 439 V440 M448.5 147 V153 M448.5 439 V440 M449.5 152 V153 M449.5 439 V440 M450.5 152 V153 M450.5 439 V440 M451.5 151 V153 M451.5 439 V440 M452.5 150 V153 M453.5 149 V153 M453.5 439 V441 M454.5 152 V153 M454.5 439 V440 M455.5 439 V444 M457.5 439 V444 M458.5 152 V153 M458.5 439 V444 M459.5 150 V153 M460.5 151 V153 M460.5 439 V440 M462.5 152 V153 M462.5 439 V440 M463.5 439 V442 M464.5 152 V153 M464.5 439 V444 M465.5 151 V153 M466.5 439 V442 M467.5 152 V153 M468.5 150 V153 M468.5 439 V442 M469.5 152 V153 M470.5 152 V153 M470.5 439 V441 M471.5 439 V440 M472.5 439 V442 M473.5 149 V153 M473.5 439 V442 M474.5 152 V153 M474.5 439 V441 M475.5 439 V440 M476.5 439 V444 M477.5 147 V153 M478.5 149 V153 M479.5 149 V153 M479.5 439 V440 M480.5 439 V440 M481.5 149 V153 M481.5 439 V441 M482.5 149 V153 M482.5 439 V441 M483.5 151 V153 M483.5 439 V443 M484.5 439 V441 M485.5 150 V153 M485.5 439 V443 M486.5 149 V153 M487.5 150 V153 M487.5 439 V440 M488.5 149 V153 M488.5 439 V443 M489.5 152 V153 M490.5 149 V153 M490.5 439 V440 M491.5 149 V153 M492.5 439 V443 M493.5 150 V153 M493.5 439 V444 M494.5 152 V153 M494.5 439 V440 M496.5 152 V153 M496.5 439 V443 M497.5 439 V442 M498.5 152 V153 M498.5 439 V440 M499.5 150 V153 M499.5 439 V441 M500.5 152 V153 M500.5 439 V440 M502.5 149 V153 M502.5 439 V444 M503.5 152 V153 M503.5 439 V441 M504.5 152 V153 M505.5 147 V153 M505.5 439 V442 M506.5 439 V443 M507.5 439 V440 M508.5 152 V153 M508.5 439 V443 M509.5 152 V153 M509.5 439 V444 M510.5 152 V153 M510.5 439 V440 M511.5 439 V443 M512.5 152 V153 M512.5 439 V443 M513.5 150 V153 M514.5 152 V153 M514.5 439 V440 M515.5 152 V153 M516.5 439 V442 M517.5 439 V443 M518.5 147 V153 M518.5 439 V441 M519.5 149 V153 M519.5 439 V441 M520.5 152 V153 M520.5 439 V443 M521.5 149 V153 M521.5 439 V442 M522.5 147 V153 M522.5 439 V444 M523.5 152 V153 M524.5 439 V444 M525.5 147 V153 M525.5 439 V440 M526.5 147 V153 M526.5 439 V444 M527.5 152 V153 M527.5 439 V444 M528.5 149 V153 M529.5 439 V440 M530.5 150 V153 M530.5 439 V443 M531.5 150 V153 M532.5 147 V153 M533.5 439 V440 M534.5 439 V442 M536.5 149 V153 M536.5 439 V440 M538.5 439 V440 M539.5 152 V153 M539.5 439 V444 M540.5 151 V153 M540.5 439 V440 M541.5 152 V153 M542.5 150 V153 M542.5 439 V441 M543.5 152 V153 M543.5 439 V442 M544.5 151 V153 M544.5 439 V444 M545.5 152 V153 M545.5 439 V441 M546.5 147 V153 M546.5 439 V440 M547.5 151 V153 M547.5 439 V440 M548.5 150 V153 M548.5 439 V442 M549.5 439 V440 M550.5 152 V153 M550.5 439 V443 M551.5 152 V153 M551.5 439 V441 M552.5 150 V153 M552.5 439 V443 M553.5 152 V153 M553.5 439 V441 M555.5 150 V153 M555.5 439 V444 M556.5 439 V441 M557.5 149 V153 M557.5 439 V442 M558.5 151 V153 M558.5 439 V443 M559.5 150 V153 M559.5 439 V440 M560.5 150 V153 M560.5 439 V442 M561.5 439 V444 M562.5 152 V153 M562.5 439 V440 M563.5 439 V441 M564.5 151 V153 M564.5 439 V441 M565.5 150 V153 M566.5 439 V440 M567.5 152 V153 M567.5 439 V441 M568.5 149 V153 M568.5 439 V443 M569.5 150 V153 M570.5 152 V153 M570.5 439 V444 M571.5 152 V153 M573.5 439 V442 M574.5 151 V153 M575.5 150 V153 M575.5 439 V440 M576.5 149 V153 M576.5 439 V441 M577.5 152 V153 M577.5 439 V440 M578.5 150 V153 M578.5 439 V444 M579.5 152 V153 M579.5 439 V440 M580.5 439 V440 M581.5 152 V153 M581.5 439 V444 M583.5 152 V153 M583.5 439 V441" stroke="#7d7900" stroke-width="1" fill="none"/>
</svg>
<div class="t" style="left:17.5px;top:101.5px;font-size:16px;color:#ffff00;">365.6mV</div>
<div class="t" style="left:17.5px;top:123.5px;font-size:16px;color:#ffff00;">265.6mV</div>
<div class="t" style="left:17.5px;top:165.4px;font-size:16px;color:#ffff00;">165.6mV</div>
<div class="t" style="left:17.5px;top:207.3px;font-size:16px;color:#ffff00;">65.69mV</div>
<div class="t" style="left:17.5px;top:249.2px;font-size:16px;color:#ffff00;">-34.3mV</div>
<div class="t" style="left:17.5px;top:291.1px;font-size:16px;color:#ffff00;">-134.3mV</div>
<div class="t" style="left:17.5px;top:333.0px;font-size:16px;color:#ffff00;">-234.3mV</div>
<div class="t" style="left:17.5px;top:374.9px;font-size:16px;color:#ffff00;">-334.3mV</div>
<div class="t" style="left:17.5px;top:416.8px;font-size:16px;color:#ffff00;">-434.3mV</div>
<div class="t" style="left:17.5px;top:458.7px;font-size:16px;color:#ffff00;">-534.3mV</div>
<div class="t" style="left:17.5px;top:500.6px;font-size:16px;color:#ffff00;">-634.3mV</div>
<div class="t" style="left:-238.3px;width:600px;text-align:center;top:101.5px;font-size:16px;color:#ff8c00;">-2μs</div>
<div class="t" style="left:-180.6px;width:600px;text-align:center;top:101.5px;font-size:16px;color:#ff8c00;">-1.5μs</div>
<div class="t" style="left:-122.9px;width:600px;text-align:center;top:101.5px;font-size:16px;color:#ff8c00;">-1μs</div>
<div class="t" style="left:-65.19999999999999px;width:600px;text-align:center;top:101.5px;font-size:16px;color:#ff8c00;">-500ns</div>
<div class="t" style="left:-7.5px;width:600px;text-align:center;top:101.5px;font-size:16px;color:#ff8c00;">0s</div>
<div class="t" style="left:50.19999999999999px;width:600px;text-align:center;top:101.5px;font-size:16px;color:#ff8c00;">500ns</div>
<div class="t" style="left:107.89999999999998px;width:600px;text-align:center;top:101.5px;font-size:16px;color:#ff8c00;">1μs</div>
<div class="t" style="left:165.60000000000002px;width:600px;text-align:center;top:101.5px;font-size:16px;color:#ff8c00;">1.5μs</div>
<div class="t" style="left:223.29999999999995px;width:600px;text-align:center;top:101.5px;font-size:16px;color:#ff8c00;">2μs</div>
<div class="t" style="right:1337px;top:101.5px;font-size:16px;color:#ff8c00;">2.5μs</div>
<svg style="left:0;top:0" width="600" height="120"><path d="M287 96 H305 L296 104.5 Z" fill="none" stroke="#ff8c00" stroke-width="1.6"/></svg>
<svg style="left:0;top:0" width="60" height="300"><path d="M7.5 243.5 H27.5 L40 253 L27.5 262.5 H7.5 Z" fill="#000" stroke="#ffff00" stroke-width="1.2"/></svg>
<div class="t" style="left:16px;top:245.8px;font-size:15px;color:#ffff00;">1</div>
<div class="a" style="left:7px;top:556px;width:577px;height:30px;background:#c3c3c3"></div>
<div class="a" style="left:7px;top:586px;width:577px;height:30px;background:#ffffff"></div>
<div class="a" style="left:7px;top:616px;width:577px;height:30px;background:#c6c6c6"></div>
<div class="a" style="left:7px;top:646px;width:577px;height:30px;background:#ffffff"></div>
<div class="a" style="left:7px;top:676px;width:577px;height:30px;background:#c6c6c6"></div>
<div class="a" style="left:7px;top:706px;width:577px;height:30px;background:#ffffff"></div>
<div class="a" style="left:7px;top:736px;width:577px;height:30px;background:#c6c6c6"></div>
<div class="a" style="left:7px;top:766px;width:577px;height:30px;background:#ffffff"></div>
<div class="a" style="left:7px;top:796px;width:577px;height:30px;background:#c6c6c6"></div>
<div class="a" style="left:7px;top:826px;width:577px;height:30px;background:#ffffff"></div>
<div class="a" style="left:7px;top:856px;width:577px;height:30px;background:#c6c6c6"></div>
<div class="a" style="left:7px;top:886px;width:577px;height:30px;background:#ffffff"></div>
<div class="a" style="left:7px;top:916px;width:577px;height:30px;background:#c6c6c6"></div>
<div class="a" style="left:7px;top:946px;width:577px;height:30px;background:#ffffff"></div>
<div class="a" style="left:7px;top:976px;width:577px;height:4px;background:#cdcdcd"></div>
<div class="a" style="left:78.7px;top:556px;width:1.2px;height:300px;background:#707070"></div>
<div class="a" style="left:150.9px;top:556px;width:1.2px;height:300px;background:#707070"></div>
<div class="a" style="left:223.10000000000002px;top:556px;width:1.2px;height:300px;background:#707070"></div>
<div class="a" style="left:295.3px;top:556px;width:1.2px;height:300px;background:#707070"></div>
<div class="a" style="left:367.5px;top:556px;width:1.2px;height:300px;background:#707070"></div>
<div class="a" style="left:439.70000000000005px;top:556px;width:1.2px;height:300px;background:#707070"></div>
<div class="a" style="left:511.9000000000001px;top:556px;width:1.2px;height:300px;background:#707070"></div>
<div class="t" style="left:-256.9px;width:600px;text-align:center;top:563.6px;font-size:14px;color:#1e2428;font-weight:bold">Name</div>
<div class="t" style="left:-184.7px;width:600px;text-align:center;top:563.6px;font-size:14px;color:#1e2428;font-weight:bold">Source</div>
<div class="t" style="left:-112.5px;width:600px;text-align:center;top:563.6px;font-size:14px;color:#1e2428;font-weight:bold">Current</div>
<div class="t" style="left:-40.299999999999955px;width:600px;text-align:center;top:563.6px;font-size:14px;color:#1e2428;font-weight:bold">Average</div>
<div class="t" style="left:31.900000000000034px;width:600px;text-align:center;top:563.6px;font-size:14px;color:#1e2428;font-weight:bold">Maximum</div>
<div class="t" style="left:104.10000000000002px;width:600px;text-align:center;top:563.6px;font-size:14px;color:#1e2428;font-weight:bold">Minimum</div>
<div class="t" style="left:176.3px;width:600px;text-align:center;top:563.6px;font-size:14px;color:#1e2428;font-weight:bold">Deviation</div>
<div class="t" style="left:248.5px;width:600px;text-align:center;top:563.6px;font-size:14px;color:#1e2428;font-weight:bold">Count</div>
<div class="t" style="left:-256.9px;width:600px;text-align:center;top:594.1px;font-size:14px;color:#111;">Vmax</div>
<div class="t" style="left:-184.7px;width:600px;text-align:center;top:594.1px;font-size:14px;color:#111;">CH1</div>
<div class="t" style="left:-112.5px;width:600px;text-align:center;top:594.1px;font-size:14px;color:#111;">167.75mV</div>
<div class="t" style="left:-40.299999999999955px;width:600px;text-align:center;top:594.1px;font-size:14px;color:#111;">166.05mV</div>
<div class="t" style="left:31.900000000000034px;width:600px;text-align:center;top:594.1px;font-size:14px;color:#111;">174.95mV</div>
<div class="t" style="left:104.10000000000002px;width:600px;text-align:center;top:594.1px;font-size:14px;color:#111;">151.20mV</div>
<div class="t" style="left:176.3px;width:600px;text-align:center;top:594.1px;font-size:14px;color:#111;">3.9019mV</div>
<div class="t" style="left:248.5px;width:600px;text-align:center;top:594.1px;font-size:14px;color:#111;">1000</div>
<div class="t" style="left:-256.9px;width:600px;text-align:center;top:624.1px;font-size:14px;color:#111;">Vmin</div>
<div class="t" style="left:-184.7px;width:600px;text-align:center;top:624.1px;font-size:14px;color:#111;">CH1</div>
<div class="t" style="left:-112.5px;width:600px;text-align:center;top:624.1px;font-size:14px;color:#111;">-390.85mV</div>
<div class="t" style="left:-40.299999999999955px;width:600px;text-align:center;top:624.1px;font-size:14px;color:#111;">-389.47mV</div>
<div class="t" style="left:31.900000000000034px;width:600px;text-align:center;top:624.1px;font-size:14px;color:#111;">-375.57mV</div>
<div class="t" style="left:104.10000000000002px;width:600px;text-align:center;top:624.1px;font-size:14px;color:#111;">-399.96mV</div>
<div class="t" style="left:176.3px;width:600px;text-align:center;top:624.1px;font-size:14px;color:#111;">3.2365mV</div>
<div class="t" style="left:248.5px;width:600px;text-align:center;top:624.1px;font-size:14px;color:#111;">1000</div>
<div class="t" style="left:-256.9px;width:600px;text-align:center;top:654.1px;font-size:14px;color:#111;">Vpp</div>
<div class="t" style="left:-184.7px;width:600px;text-align:center;top:654.1px;font-size:14px;color:#111;">CH1</div>
<div class="t" style="left:-112.5px;width:600px;text-align:center;top:654.1px;font-size:14px;color:#111;">558.61mV</div>
<div class="t" style="left:-40.299999999999955px;width:600px;text-align:center;top:654.1px;font-size:14px;color:#111;">555.52mV</div>
<div class="t" style="left:31.900000000000034px;width:600px;text-align:center;top:654.1px;font-size:14px;color:#111;">568.02mV</div>
<div class="t" style="left:104.10000000000002px;width:600px;text-align:center;top:654.1px;font-size:14px;color:#111;">530.79mV</div>
<div class="t" style="left:176.3px;width:600px;text-align:center;top:654.1px;font-size:14px;color:#111;">6.4570mV</div>
<div class="t" style="left:248.5px;width:600px;text-align:center;top:654.1px;font-size:14px;color:#111;">1000</div>
<div class="t" style="left:-256.9px;width:600px;text-align:center;top:684.1px;font-size:14px;color:#111;">Vtop</div>
<div class="t" style="left:-184.7px;width:600px;text-align:center;top:684.1px;font-size:14px;color:#111;">CH1</div>
<div class="t" style="left:-112.5px;width:600px;text-align:center;top:684.1px;font-size:14px;color:#111;">167.75mV</div>
<div class="t" style="left:-40.299999999999955px;width:600px;text-align:center;top:684.1px;font-size:14px;color:#111;">166.05mV</div>
<div class="t" style="left:31.900000000000034px;width:600px;text-align:center;top:684.1px;font-size:14px;color:#111;">174.95mV</div>
<div class="t" style="left:104.10000000000002px;width:600px;text-align:center;top:684.1px;font-size:14px;color:#111;">151.20mV</div>
<div class="t" style="left:176.3px;width:600px;text-align:center;top:684.1px;font-size:14px;color:#111;">3.9103mV</div>
<div class="t" style="left:248.5px;width:600px;text-align:center;top:684.1px;font-size:14px;color:#111;">1000</div>
<div class="t" style="left:-256.9px;width:600px;text-align:center;top:714.1px;font-size:14px;color:#111;">Period</div>
<div class="t" style="left:-184.7px;width:600px;text-align:center;top:714.1px;font-size:14px;color:#111;">CH1</div>
<div class="t" style="left:-112.5px;width:600px;text-align:center;top:714.1px;font-size:14px;color:#111;">5.3560ns</div>
<div class="t" style="left:-40.299999999999955px;width:600px;text-align:center;top:714.1px;font-size:14px;color:#111;">5.2599ns</div>
<div class="t" style="left:31.900000000000034px;width:600px;text-align:center;top:714.1px;font-size:14px;color:#111;">5.7780ns</div>
<div class="t" style="left:104.10000000000002px;width:600px;text-align:center;top:714.1px;font-size:14px;color:#111;">4.7500ns</div>
<div class="t" style="left:176.3px;width:600px;text-align:center;top:714.1px;font-size:14px;color:#111;">146.47ps</div>
<div class="t" style="left:248.5px;width:600px;text-align:center;top:714.1px;font-size:14px;color:#111;">1000</div>
<div class="t" style="left:-256.9px;width:600px;text-align:center;top:744.1px;font-size:14px;color:#111;">Freq</div>
<div class="t" style="left:-184.7px;width:600px;text-align:center;top:744.1px;font-size:14px;color:#111;">CH1</div>
<div class="a" style="left:151.4px;top:736px;width:72.2px;height:30px;overflow:hidden"><div class="t" style="left:0;width:72.2px;text-align:center;top:3.0px;font-size:14px;color:#111">186.70MH</div><div class="t" style="left:0;width:72.2px;text-align:center;top:19.9px;font-size:14px;color:#111">z</div></div>
<div class="a" style="left:223.6px;top:736px;width:72.2px;height:30px;overflow:hidden"><div class="t" style="left:0;width:72.2px;text-align:center;top:3.0px;font-size:14px;color:#111">190.26MH</div><div class="t" style="left:0;width:72.2px;text-align:center;top:19.9px;font-size:14px;color:#111">z</div></div>
<div class="t" style="left:31.900000000000034px;width:600px;text-align:center;top:744.1px;font-size:14px;color:#111;">210.52MHz</div>
<div class="a" style="left:368.0px;top:736px;width:72.2px;height:30px;overflow:hidden"><div class="t" style="left:0;width:72.2px;text-align:center;top:3.0px;font-size:14px;color:#111">173.07MH</div><div class="t" style="left:0;width:72.2px;text-align:center;top:19.9px;font-size:14px;color:#111">z</div></div>
<div class="a" style="left:440.2px;top:736px;width:72.2px;height:30px;overflow:hidden"><div class="t" style="left:0;width:72.2px;text-align:center;top:3.0px;font-size:14px;color:#111">5.5213MH</div><div class="t" style="left:0;width:72.2px;text-align:center;top:19.9px;font-size:14px;color:#111">z</div></div>
<div class="t" style="left:248.5px;width:600px;text-align:center;top:744.1px;font-size:14px;color:#111;">1000</div>
<div class="t" style="left:-256.9px;width:600px;text-align:center;top:774.1px;font-size:14px;color:#111;">RiseTime</div>
<div class="t" style="left:-184.7px;width:600px;text-align:center;top:774.1px;font-size:14px;color:#111;">CH1</div>
<div class="t" style="left:-112.5px;width:600px;text-align:center;top:774.1px;font-size:14px;color:#111;">1.7940ns</div>
<div class="t" style="left:-40.299999999999955px;width:600px;text-align:center;top:774.1px;font-size:14px;color:#111;">1.7562ns</div>
<div class="t" style="left:31.900000000000034px;width:600px;text-align:center;top:774.1px;font-size:14px;color:#111;">2.7810ns</div>
<div class="t" style="left:104.10000000000002px;width:600px;text-align:center;top:774.1px;font-size:14px;color:#111;">1.5210ns</div>
<div class="t" style="left:176.3px;width:600px;text-align:center;top:774.1px;font-size:14px;color:#111;">117.39ps</div>
<div class="t" style="left:248.5px;width:600px;text-align:center;top:774.1px;font-size:14px;color:#111;">1000</div>
<div class="t" style="left:-256.9px;width:600px;text-align:center;top:804.1px;font-size:14px;color:#111;">+Width</div>
<div class="t" style="left:-184.7px;width:600px;text-align:center;top:804.1px;font-size:14px;color:#111;">CH1</div>
<div class="t" style="left:-112.5px;width:600px;text-align:center;top:804.1px;font-size:14px;color:#111;">2.7040ns</div>
<div class="t" style="left:-40.299999999999955px;width:600px;text-align:center;top:804.1px;font-size:14px;color:#111;">2.6383ns</div>
<div class="t" style="left:31.900000000000034px;width:600px;text-align:center;top:804.1px;font-size:14px;color:#111;">2.9340ns</div>
<div class="t" style="left:104.10000000000002px;width:600px;text-align:center;top:804.1px;font-size:14px;color:#111;">2.3500ns</div>
<div class="t" style="left:176.3px;width:600px;text-align:center;top:804.1px;font-size:14px;color:#111;">76.521ps</div>
<div class="t" style="left:248.5px;width:600px;text-align:center;top:804.1px;font-size:14px;color:#111;">1000</div>
<div class="t" style="left:-256.9px;width:600px;text-align:center;top:834.1px;font-size:14px;color:#111;">VRMS</div>
<div class="t" style="left:-184.7px;width:600px;text-align:center;top:834.1px;font-size:14px;color:#111;">CH1</div>
<div class="t" style="left:-112.5px;width:600px;text-align:center;top:834.1px;font-size:14px;color:#111;">215.09mV</div>
<div class="t" style="left:-40.299999999999955px;width:600px;text-align:center;top:834.1px;font-size:14px;color:#111;">215.50mV</div>
<div class="t" style="left:31.900000000000034px;width:600px;text-align:center;top:834.1px;font-size:14px;color:#111;">218.62mV</div>
<div class="t" style="left:104.10000000000002px;width:600px;text-align:center;top:834.1px;font-size:14px;color:#111;">214.60mV</div>
<div class="t" style="left:176.3px;width:600px;text-align:center;top:834.1px;font-size:14px;color:#111;">435.87uV</div>
<div class="t" style="left:248.5px;width:600px;text-align:center;top:834.1px;font-size:14px;color:#111;">1000</div>
<svg style="left:0;top:0" width="1920" height="1080">
<path d="M647.8 96 V521 M705.6 96 V521 M763.4 96 V521 M821.2 96 V521 M879.0 96 V521 M936.8 96 V521 M994.6 96 V521 M1052.4 96 V521 M1110.2 96 V521" stroke="#a0a0a0" stroke-width="1.3" stroke-dasharray="1.3 7.20" fill="none"/><path d="M590 138.5 H1168 M590 181.0 H1168 M590 223.5 H1168 M590 266.0 H1168 M590 308.5 H1168 M590 351.0 H1168 M590 393.5 H1168 M590 436.0 H1168 M590 478.5 H1168" stroke="#a0a0a0" stroke-width="1.3" stroke-dasharray="1.3 10.26" fill="none"/>
<path d="M591.0 186V344M593.0 186V343M595.0 101V447M597.0 216V447M599.0 194V375M601.0 194V415M603.0 221V415M605.0 170V355M607.0 170V355M609.0 355V361M611.0 97V459M613.0 97V362M615.0 202V362M617.0 202V453M619.0 145V453M621.0 145V367M623.0 201V422M625.0 200V370M627.0 358V370M629.0 205V358M631.0 205V358M633.0 186V217M635.0 217V388M637.0 212V388M639.0 199V363M641.0 196V363M643.0 106V359M645.0 106V363M647.0 200V367M649.0 198V367M651.0 198V366M653.0 203V403M655.0 204V366M657.0 204V266M659.0 205V398M661.0 209V398M663.0 205V370M665.0 189V373M667.0 189V373M669.0 207V366M671.0 211V368M673.0 135V368M675.0 211V369M677.0 211V372M679.0 214V371M681.0 160V379M683.0 160V379M685.0 221V380M687.0 218V380M689.0 218V383M691.0 221V383M693.0 221V274M695.0 225V385M697.0 225V387M699.0 229V394M701.0 229V395M703.0 229V362M705.0 231V400M707.0 233V400M709.0 115V435M711.0 115V439M713.0 214V233M715.0 217V408M717.0 407V456M719.0 219V456M721.0 219V392M723.0 224V392M725.0 206V392M727.0 227V438M729.0 227V396M731.0 233V469M733.0 151V469M735.0 136V239M737.0 136V472M739.0 406V497M741.0 239V412M743.0 224V412M745.0 277V411M747.0 228V410M749.0 226V414M751.0 226V416M753.0 214V232M755.0 214V417M757.0 233V417M759.0 138V412M761.0 138V423M763.0 242V428M765.0 240V428M767.0 245V407M769.0 246V408M771.0 246V406M773.0 249V429M775.0 251V412M777.0 221V482M779.0 221V450M781.0 413V450M783.0 225V414M785.0 223V414M787.0 223V411M789.0 225V281M791.0 227V412M793.0 227V229M795.0 229V398M797.0 229V398M799.0 227V431M801.0 230V433M803.0 231V433M805.0 230V408M807.0 231V435M809.0 172V435M811.0 172V521M813.0 236V434M815.0 180V438M817.0 180V244M819.0 244V438M821.0 245V436M823.0 227V437M825.0 248V437M827.0 288V335M829.0 249V336M831.0 312V399M833.0 255V399M835.0 186V311M837.0 186V272M839.0 261V347M841.0 260V351M843.0 349V414M845.0 196V349M847.0 196V198M849.0 198V339M851.0 198V338M853.0 199V368M855.0 204V368M857.0 204V430M859.0 209V340M861.0 215V340M863.0 210V343M865.0 327V346M867.0 214V346M869.0 142V345M871.0 217V345M873.0 217V349M875.0 221V346M877.0 225V346M879.0 225V344M881.0 230V346M883.0 127V346M885.0 127V351M887.0 105V351M889.0 208V349M891.0 209V354M893.0 354V373M895.0 355V417M897.0 300V366M899.0 219V366M901.0 218V367M903.0 362V372M905.0 225V372M907.0 224V374M909.0 216V378M911.0 216V378M913.0 216V376M915.0 160V378M917.0 160V383M919.0 219V387M921.0 218V386M923.0 134V389M925.0 134V390M927.0 155V394M929.0 155V396M931.0 124V394M933.0 124V396M935.0 222V375M937.0 135V375M939.0 135V379M941.0 223V382M943.0 223V379M945.0 228V480M947.0 226V480M949.0 229V388M951.0 231V388M953.0 232V391M955.0 230V391M957.0 179V392M959.0 179V398M961.0 183V281M963.0 183V371M965.0 186V191M967.0 188V374M969.0 161V372M971.0 177V373M973.0 181V373M975.0 177V465M977.0 378V465M979.0 271V378M981.0 163V382M983.0 185V382M985.0 182V389M987.0 182V390M989.0 185V392M991.0 184V390M993.0 184V241M995.0 185V197M997.0 187V395M999.0 155V236M1001.0 200V402M1003.0 204V401M1005.0 205V505M1007.0 392V505M1009.0 208V408M1011.0 151V408M1013.0 145V407M1015.0 207V414M1017.0 209V411M1019.0 216V415M1021.0 214V415M1023.0 214V392M1025.0 116V216M1027.0 215V395M1029.0 218V395M1031.0 218V395M1033.0 221V395M1035.0 224V397M1037.0 198V403M1039.0 198V402M1041.0 227V401M1043.0 371V405M1045.0 230V403M1047.0 134V230M1049.0 227V407M1051.0 228V461M1053.0 233V479M1055.0 216V409M1057.0 216V414M1059.0 219V412M1061.0 221V373M1063.0 221V338M1065.0 172V316M1067.0 169V298M1069.0 172V298M1071.0 227V298M1073.0 296V419M1075.0 178V419M1077.0 178V342M1079.0 194V342M1081.0 194V347M1083.0 161V348M1085.0 243V348M1087.0 199V346M1089.0 202V349M1091.0 180V352M1093.0 180V354M1095.0 201V353M1097.0 178V238M1099.0 178V358M1101.0 208V360M1103.0 149V236M1105.0 149V363M1107.0 212V360M1109.0 215V402M1111.0 202V382M1113.0 202V369M1115.0 208V319M1117.0 209V383M1119.0 209V383M1121.0 210V386M1123.0 241V391M1125.0 165V391M1127.0 165V390M1129.0 201V277M1131.0 204V395M1133.0 206V398M1135.0 209V398M1137.0 348V428M1139.0 136V428M1141.0 136V404M1143.0 207V328M1145.0 207V407M1147.0 213V328M1149.0 215V410M1151.0 221V401M1153.0 221V309M1155.0 242V404M1157.0 224V407M1159.0 224V440M1161.0 227V411M1163.0 227V413M1165.0 227V416M1167.0 295V419" stroke="#5b96d6" stroke-width="2" fill="none"/>
<path d="M1231.7 96 V521 M1289.4 96 V521 M1347.1 96 V521 M1404.8 96 V521 M1462.5 96 V521 M1520.2 96 V521 M1577.9 96 V521 M1635.6 96 V521 M1693.3 96 V521" stroke="#a0a0a0" stroke-width="1.3" stroke-dasharray="1.3 7.20" fill="none"/><path d="M1174 138.5 H1751 M1174 181.0 H1751 M1174 223.5 H1751 M1174 266.0 H1751 M1174 308.5 H1751 M1174 351.0 H1751 M1174 393.5 H1751 M1174 436.0 H1751 M1174 478.5 H1751" stroke="#a0a0a0" stroke-width="1.3" stroke-dasharray="1.3 10.24" fill="none"/>
<path d="M1176.0 450V509M1178.0 463V503M1180.0 469V491M1182.0 464V501M1184.0 460V491M1186.0 460V497M1188.0 459V496M1190.0 463V491M1192.0 467V500M1194.0 464V505M1196.0 458V494M1198.0 434V521M1200.0 468V501M1202.0 463V521M1204.0 468V521M1206.0 469V511M1208.0 473V518M1210.0 469V500M1212.0 460V491M1214.0 449V498M1216.0 468V489M1218.0 470V493M1220.0 450V509M1222.0 428V494M1224.0 459V502M1226.0 435V492M1228.0 472V503M1230.0 468V488M1232.0 457V488M1234.0 471V498M1236.0 467V512M1238.0 462V487M1240.0 469V490M1242.0 464V506M1244.0 464V513M1246.0 470V507M1248.0 454V495M1250.0 469V505M1252.0 460V496M1254.0 468V499M1256.0 468V490M1258.0 461V491M1260.0 472V496M1262.0 465V500M1264.0 471V494M1266.0 464V497M1268.0 467V490M1270.0 467V502M1272.0 468V521M1274.0 458V506M1276.0 454V490M1278.0 471V521M1280.0 466V498M1282.0 451V497M1284.0 467V506M1286.0 465V492M1288.0 465V498M1290.0 458V492M1292.0 458V506M1294.0 462V517M1296.0 465V508M1298.0 461V492M1300.0 467V496M1302.0 466V505M1304.0 467V499M1306.0 464V514M1308.0 463V499M1310.0 468V492M1312.0 464V498M1314.0 464V492M1316.0 471V493M1318.0 450V505M1320.0 467V498M1322.0 464V487M1324.0 467V493M1326.0 470V492M1328.0 473V492M1330.0 466V489M1332.0 468V496M1334.0 470V490M1336.0 457V515M1338.0 470V521M1340.0 467V521M1342.0 448V495M1344.0 458V505M1346.0 467V486M1348.0 466V509M1350.0 464V491M1352.0 469V495M1354.0 469V497M1356.0 467V503M1358.0 465V498M1360.0 464V491M1362.0 468V512M1364.0 471V487M1366.0 462V497M1368.0 466V500M1370.0 451V499M1372.0 465V487M1374.0 473V494M1376.0 469V492M1378.0 464V491M1380.0 464V504M1382.0 468V494M1384.0 466V521M1386.0 461V511M1388.0 458V492M1390.0 462V493M1392.0 462V503M1394.0 458V503M1396.0 465V521M1398.0 468V501M1400.0 462V492M1402.0 465V491M1404.0 456V487M1406.0 471V499M1408.0 465V490M1410.0 465V500M1412.0 460V521M1414.0 447V492M1416.0 455V496M1418.0 467V491M1420.0 464V489M1422.0 470V521M1424.0 464V508M1426.0 468V487M1428.0 471V498M1430.0 467V496M1432.0 468V491M1434.0 456V496M1436.0 460V487M1438.0 464V509M1440.0 463V497M1442.0 467V490M1444.0 467V493M1446.0 450V488M1448.0 466V502M1450.0 467V511M1452.0 470V494M1454.0 460V498M1456.0 448V507M1458.0 458V500M1460.0 472V506M1462.0 453V501M1464.0 445V493M1466.0 454V499M1468.0 469V495M1470.0 470V498M1472.0 469V492M1474.0 445V493M1476.0 471V502M1478.0 469V494M1480.0 467V492M1482.0 472V497M1484.0 458V517M1486.0 466V490M1488.0 472V499M1490.0 462V497M1492.0 452V495M1494.0 466V502M1496.0 464V497M1498.0 451V495M1500.0 466V498M1502.0 467V488M1504.0 468V491M1506.0 463V490M1508.0 470V488M1510.0 468V500M1512.0 468V489M1514.0 466V503M1516.0 466V489M1518.0 468V504M1520.0 466V492M1522.0 462V491M1524.0 463V500M1526.0 472V490M1528.0 451V495M1530.0 471V500M1532.0 461V501M1534.0 461V491M1536.0 459V490M1538.0 469V502M1540.0 464V498M1542.0 458V493M1544.0 460V490M1546.0 455V502M1548.0 469V493M1550.0 472V507M1552.0 473V505M1554.0 458V488M1556.0 463V501M1558.0 453V487M1560.0 469V492M1562.0 465V493M1564.0 467V500M1566.0 472V491M1568.0 468V495M1570.0 466V494M1572.0 465V489M1574.0 452V498M1576.0 468V511M1578.0 464V521M1580.0 455V493M1582.0 443V501M1584.0 463V491M1586.0 463V509M1588.0 459V496M1590.0 460V518M1592.0 470V497M1594.0 458V502M1596.0 452V490M1598.0 461V498M1600.0 468V499M1602.0 461V498M1604.0 465V518M1606.0 472V489M1608.0 469V501M1610.0 461V501M1612.0 472V498M1614.0 466V487M1616.0 467V496M1618.0 467V493M1620.0 464V501M1622.0 439V493M1624.0 468V504M1626.0 456V513M1628.0 463V505M1630.0 457V495M1632.0 464V496M1634.0 450V490M1636.0 463V495M1638.0 469V505M1640.0 470V517M1642.0 459V498M1644.0 467V504M1646.0 463V489M1648.0 468V506M1650.0 466V517M1652.0 458V493M1654.0 453V489M1656.0 461V491M1658.0 439V507M1660.0 470V521M1662.0 464V508M1664.0 446V490M1666.0 469V488M1668.0 472V508M1670.0 457V489M1672.0 462V494M1674.0 465V495M1676.0 467V494M1678.0 469V498M1680.0 469V496M1682.0 467V520M1684.0 472V487M1686.0 463V502M1688.0 435V496M1690.0 472V498M1692.0 446V495M1694.0 462V492M1696.0 465V507M1698.0 453V501M1700.0 461V496M1702.0 464V489M1704.0 465V490M1706.0 471V487M1708.0 462V494M1710.0 473V497M1712.0 468V491M1714.0 449V491M1716.0 462V490M1718.0 472V491M1720.0 467V491M1722.0 464V497M1724.0 465V497M1726.0 470V496M1728.0 471V521M1730.0 460V488M1732.0 463V521M1734.0 458V498M1736.0 463V507M1738.0 472V521M1740.0 464V503M1742.0 470V489M1744.0 465V494M1746.0 463V486M1748.0 472V490M1750.0 466V488M1440.5 312V470M1441.5 348V470M1439.5 435V470M1306.5 432V470M1707.5 420V470M1175.5 321V500M1176.5 330V500M1499.5 447V470M1397.5 447V470M1660.5 447V470M1587.5 450V470M1335.5 452V470M1365.5 450V470M1420.5 448V470M1466.5 452V470M1530.5 450V470M1551.5 446V470M1625.5 452V470" stroke="#5b96d6" stroke-width="2" fill="none"/>
<path d="M647.8 556 V980 M705.6 556 V980 M763.4 556 V980 M821.2 556 V980 M879.0 556 V980 M936.8 556 V980 M994.6 556 V980 M1052.4 556 V980 M1110.2 556 V980" stroke="#a0a0a0" stroke-width="1.3" stroke-dasharray="1.3 7.18" fill="none"/><path d="M590 598.4 H1168 M590 640.8 H1168 M590 683.2 H1168 M590 725.6 H1168 M590 768.0 H1168 M590 810.4 H1168 M590 852.8 H1168 M590 895.2 H1168 M590 937.6 H1168" stroke="#a0a0a0" stroke-width="1.3" stroke-dasharray="1.3 10.26" fill="none"/>
<path d="M591.0 955V980M593.0 939V980M595.0 940V980M597.0 953V980M599.0 957V980M601.0 932V980M603.0 922V980M605.0 932V980M607.0 955V980M609.0 955V980M611.0 925V980M613.0 923V980M615.0 954V980M617.0 959V980M619.0 944V980M621.0 949V980M623.0 960V980M625.0 959V980M627.0 954V980M629.0 954V980M631.0 952V980M633.0 955V980M635.0 952V980M637.0 956V980M639.0 957V980M641.0 914V980M643.0 955V980M645.0 965V980M647.0 935V980M649.0 934V980M651.0 963V980M653.0 969V980M655.0 948V980M657.0 946V980M659.0 965V980M661.0 967V980M663.0 957V980M665.0 954V980M667.0 968V980M669.0 952V980M671.0 936V980M673.0 923V980M675.0 922V980M677.0 933V980M679.0 955V980M681.0 966V980M683.0 919V980M685.0 965V980M687.0 961V980M689.0 928V980M691.0 959V980M693.0 953V980M695.0 956V980M697.0 952V980M699.0 954V980M701.0 956V980M703.0 936V980M705.0 921V980M707.0 933V980M709.0 953V980M711.0 965V980M713.0 942V980M715.0 927V980M717.0 937V980M719.0 968V980M721.0 963V980M723.0 942V980M725.0 924V980M727.0 923V980M729.0 938V980M731.0 960V980M733.0 955V980M735.0 955V980M737.0 952V980M739.0 956V980M741.0 955V980M743.0 958V980M745.0 945V980M747.0 940V980M749.0 954V980M751.0 957V980M753.0 934V980M755.0 919V980M757.0 907V980M759.0 916V980M761.0 936V980M763.0 959V980M765.0 958V980M767.0 926V980M769.0 929V980M771.0 958V980M773.0 960V980M775.0 936V980M777.0 938V980M779.0 963V980M781.0 955V980M783.0 915V980M785.0 955V980M787.0 962V980M789.0 922V980M791.0 920V980M793.0 965V980M795.0 955V980M797.0 935V980M799.0 952V980M801.0 962V980M803.0 933V980M805.0 932V980M807.0 964V980M809.0 954V980M811.0 949V980M813.0 946V980M815.0 946V980M817.0 952V980M819.0 953V980M821.0 966V980M823.0 930V980M825.0 965V980M827.0 965V980M829.0 944V980M831.0 927V980M833.0 917V980M835.0 926V980M837.0 941V980M839.0 961V980M841.0 951V980M843.0 950V980M845.0 955V980M847.0 954V980M849.0 951V980M851.0 954V980M853.0 952V980M855.0 938V980M857.0 934V980M859.0 941V980M861.0 950V980M863.0 964V980M865.0 928V980M867.0 913V980M869.0 931V980M871.0 968V980M873.0 954V980M875.0 926V980M877.0 952V980M879.0 966V980M881.0 951V980M883.0 955V980M885.0 967V980M887.0 955V980M889.0 944V980M891.0 952V980M893.0 947V980M895.0 943V980M897.0 943V980M899.0 947V980M901.0 952V980M903.0 947V980M905.0 950V980M907.0 956V980M909.0 931V980M911.0 935V980M913.0 957V980M915.0 962V980M917.0 937V980M919.0 938V980M921.0 962V980M923.0 961V980M925.0 946V980M927.0 943V980M929.0 938V980M931.0 949V980M933.0 961V980M935.0 962V980M937.0 933V980M939.0 935V980M941.0 964V980M943.0 952V980M945.0 943V980M947.0 953V980M949.0 955V980M951.0 947V980M953.0 948V980M955.0 947V980M957.0 952V980M959.0 956V980M961.0 956V980M963.0 938V980M965.0 923V980M967.0 913V980M969.0 920V980M971.0 936V980M973.0 956V980M975.0 964V980M977.0 935V980M979.0 919V980M981.0 915V980M983.0 939V980M985.0 967V980M987.0 962V980M989.0 954V980M991.0 956V980M993.0 953V980M995.0 956V980M997.0 955V980M999.0 962V980M1001.0 956V980M1003.0 934V980M1005.0 913V980M1007.0 913V980M1009.0 930V980M1011.0 957V980M1013.0 963V980M1015.0 935V980M1017.0 923V980M1019.0 934V980M1021.0 959V980M1023.0 967V980M1025.0 955V980M1027.0 948V980M1029.0 957V980M1031.0 969V980M1033.0 964V980M1035.0 941V980M1037.0 945V980M1039.0 969V980M1041.0 963V980M1043.0 954V980M1045.0 955V980M1047.0 951V980M1049.0 956V980M1051.0 963V980M1053.0 965V980M1055.0 952V980M1057.0 940V980M1059.0 934V980M1061.0 942V980M1063.0 952V980M1065.0 963V980M1067.0 955V980M1069.0 935V980M1071.0 935V980M1073.0 959V980M1075.0 964V980M1077.0 933V980M1079.0 935V980M1081.0 965V980M1083.0 960V980M1085.0 950V980M1087.0 938V980M1089.0 936V980M1091.0 942V980M1093.0 947V980M1095.0 957V980M1097.0 961V980M1099.0 942V980M1101.0 942V980M1103.0 966V980M1105.0 962V980M1107.0 921V980M1109.0 926V980M1111.0 959V980M1113.0 959V980M1115.0 920V980M1117.0 955V980M1119.0 960V980M1121.0 918V980M1123.0 916V980M1125.0 957V980M1127.0 954V980M1129.0 942V980M1131.0 930V980M1133.0 939V980M1135.0 951V980M1137.0 957V980M1139.0 921V980M1141.0 919V980M1143.0 958V980M1145.0 965V980M1147.0 945V980M1149.0 934V980M1151.0 927V980M1153.0 935V980M1155.0 945V980M1157.0 965V980M1159.0 957V980M1161.0 943V980M1163.0 943V980M1165.0 961V980M1167.0 964V980M879 768V980M880.5 850V980" stroke="#00ffff" stroke-width="2" fill="none"/>
<path d="M1231.7 556 V980 M1289.4 556 V980 M1347.1 556 V980 M1404.8 556 V980 M1462.5 556 V980 M1520.2 556 V980 M1577.9 556 V980 M1635.6 556 V980 M1693.3 556 V980" stroke="#a0a0a0" stroke-width="1.3" stroke-dasharray="1.3 7.18" fill="none"/><path d="M1174 598.4 H1751 M1174 640.8 H1751 M1174 683.2 H1751 M1174 725.6 H1751 M1174 768.0 H1751 M1174 810.4 H1751 M1174 852.8 H1751 M1174 895.2 H1751 M1174 937.6 H1751" stroke="#a0a0a0" stroke-width="1.3" stroke-dasharray="1.3 10.24" fill="none"/>
<rect x="1174" y="978.6" width="577" height="1.8" fill="#ff00ff"/>
<path d="M1353 969V979M1361 973V979M1367 975V979M1369 975V979M1373 973V979M1375 974V979M1377 970V979M1379 971V979M1381 971V979M1383 966V979M1385 969V979M1387 961V979M1389 963V979M1391 960V979M1393 960V979M1395 956V979M1397 958V979M1399 958V979M1401 940V979M1403 949V979M1405 933V979M1407 943V979M1409 918V979M1411 915V979M1413 914V979M1415 908V979M1417 909V979M1419 898V979M1421 920V979M1423 898V979M1425 874V979M1427 902V979M1429 855V979M1431 850V979M1433 875V979M1435 873V979M1437 861V979M1439 861V979M1441 808V979M1443 852V979M1445 878V979M1447 869V979M1449 810V979M1451 781V979M1453 824V979M1455 822V979M1457 814V979M1459 793V979M1461 844V979M1463 805V979M1465 810V979M1467 804V979M1469 848V979M1471 851V979M1473 835V979M1475 783V979M1477 841V979M1479 821V979M1481 851V979M1483 872V979M1485 878V979M1487 822V979M1489 831V979M1491 867V979M1493 850V979M1495 857V979M1497 849V979M1499 852V979M1501 891V979M1503 865V979M1505 874V979M1507 898V979M1509 891V979M1511 913V979M1513 922V979M1515 931V979M1517 915V979M1519 941V979M1521 947V979M1523 932V979M1525 937V979M1527 947V979M1529 944V979M1531 960V979M1533 959V979M1535 961V979M1537 961V979M1539 966V979M1541 968V979M1543 967V979M1545 965V979M1547 966V979M1549 969V979M1551 972V979M1553 974V979M1555 972V979M1557 974V979M1559 974V979M1563 968V979M1567 973V979M1573 975V979M1581 974V979M1587 970V979M1463.5 768V979" stroke="#ff00ff" stroke-width="2" fill="none"/>
</svg>
<div class="t" style="left:1179px;top:98.3px;font-size:15px;color:#d2d2d2;letter-spacing:0.25px">100.00dBm</div>
<div class="t" style="left:1252px;top:98.3px;font-size:15px;color:#d2d2d2;letter-spacing:0.25px">80.00MHz</div>
<div class="t" style="left:1364px;top:98.3px;font-size:15px;color:#d2d2d2;letter-spacing:0.25px">160.00MHz</div>
<div class="t" style="left:1479px;top:98.3px;font-size:15px;color:#d2d2d2;letter-spacing:0.25px">240.00MHz</div>
<div class="t" style="left:1594px;top:98.3px;font-size:15px;color:#d2d2d2;letter-spacing:0.25px">320.00MHz</div>
<div class="t" style="left:1666px;top:98.3px;font-size:15px;color:#d2d2d2;letter-spacing:0.25px">400.00MHz</div>
<div class="t" style="left:1179px;top:132.3px;font-size:15px;color:#d2d2d2;letter-spacing:0.25px">80.00dBm</div>
<div class="t" style="left:1179px;top:174.8px;font-size:15px;color:#d2d2d2;letter-spacing:0.25px">60.00dBm</div>
<div class="t" style="left:1179px;top:217.3px;font-size:15px;color:#d2d2d2;letter-spacing:0.25px">40.00dBm</div>
<div class="t" style="left:1179px;top:259.8px;font-size:15px;color:#d2d2d2;letter-spacing:0.25px">20.00dBm</div>
<div class="t" style="left:1179px;top:302.3px;font-size:15px;color:#d2d2d2;letter-spacing:0.25px">0.00dBm</div>
<div class="t" style="left:1179px;top:344.8px;font-size:15px;color:#d2d2d2;letter-spacing:0.25px">-20.00dBm</div>
<div class="t" style="left:1179px;top:387.3px;font-size:15px;color:#d2d2d2;letter-spacing:0.25px">-40.00dBm</div>
<div class="t" style="left:1179px;top:429.8px;font-size:15px;color:#d2d2d2;letter-spacing:0.25px">-60.00dBm</div>
<div class="t" style="left:1179px;top:503.3px;font-size:15px;color:#d2d2d2;letter-spacing:0.25px">-100.00dBm</div>
<div class="a" style="left:1758px;top:63px;width:158px;height:921px;background:#000;border-radius:9px"></div>
<div class="a" style="left:1761px;top:66px;width:152px;height:35px;background:#50595d;border-radius:7px 7px 0 0"></div>
<div class="a" style="left:1761px;top:105px;width:152px;height:876px;background:#2c353b;border-radius:0 0 7px 7px"></div>
<div class="t" style="left:1802px;top:76.3px;font-size:15px;color:#f0f0f0;">Result</div>
<svg style="left:1870px;top:68px" width="40" height="30"><path d="M5.8 14.3 L17.5 13.6 V16.4 L5.8 15.7 Z" fill="#fff"/><path d="M17.2 7 Q17.2 6 18.5 6 Q21.5 6 23 9.7 H29 Q30 8 31.5 8 Q33 8 33 10 V20 Q33 22 31.5 22 Q30 22 29 20.3 H23 Q21.5 24 18.5 24 Q17.2 24 17.2 23 Z" fill="#fff"/></svg>
<svg style="left:0;top:0" width="1920" height="300"><path d="M1767 117 Q1767 111 1773 111 H1856 Q1862 111 1862 117 V140 H1901 Q1907 140 1907 146 V160 Q1907 166 1901 166 H1773 Q1767 166 1767 160 Z" fill="#50595d" stroke="#2dd18a" stroke-width="2.4"/></svg>
<svg style="left:1771px;top:116px" width="21" height="21"><rect x="0.5" y="0.5" width="20" height="20" fill="#2c353b" stroke="#747e83" stroke-width="1"/><path d="M3.5 13.7 H8.6 V2.8 H14.3 V13.7 H19" fill="none" stroke="#d0d0d0" stroke-width="1.2"/><path d="M2.7 3 V18.5" stroke="#3cb878" stroke-width="1.1"/></svg>
<div class="t" style="left:1796px;top:118.5px;font-size:16px;color:#f0f0f0">Vmax(<span style="color:#ffff00">1</span>)</div>
<div class="t" style="left:1770px;top:144.1px;font-size:20px;color:#fff;">167.75mV</div>
<svg style="left:1885px;top:149px" width="14" height="9"><path d="M0.5 0.5 H13.5 L7 8 Z" fill="#fff"/></svg>
<div class="a" style="left:1766px;top:172px;width:93px;height:40px;background:#50595d;border-radius:7px 7px 0 0"></div>
<div class="a" style="left:1766px;top:201px;width:142px;height:28px;background:#50595d;border-radius:0 7px 7px 7px"></div>
<svg style="left:1771px;top:178px" width="21" height="21"><rect x="0.5" y="0.5" width="20" height="20" fill="#2c353b" stroke="#747e83" stroke-width="1"/><path d="M3.5 13.7 H8.6 V2.8 H14.3 V13.7 H19" fill="none" stroke="#d0d0d0" stroke-width="1.2"/><path d="M2.7 3 V18.5" stroke="#3cb878" stroke-width="1.1"/></svg>
<div class="t" style="left:1796px;top:180.5px;font-size:16px;color:#f0f0f0">Vmin(<span style="color:#ffff00">1</span>)</div>
<div class="t" style="left:1770px;top:206.1px;font-size:20px;color:#fff;">-390.85mV</div>
<svg style="left:1885px;top:211px" width="14" height="9"><path d="M0.5 0.5 H13.5 L7 8 Z" fill="#fff"/></svg>
<div class="a" style="left:1766px;top:234px;width:86px;height:40px;background:#50595d;border-radius:7px 7px 0 0"></div>
<div class="a" style="left:1766px;top:263px;width:142px;height:28px;background:#50595d;border-radius:0 7px 7px 7px"></div>
<svg style="left:1771px;top:240px" width="21" height="21"><rect x="0.5" y="0.5" width="20" height="20" fill="#2c353b" stroke="#747e83" stroke-width="1"/><path d="M3.5 13.7 H8.6 V2.8 H14.3 V13.7 H19" fill="none" stroke="#d0d0d0" stroke-width="1.2"/><path d="M2.7 3 V18.5" stroke="#3cb878" stroke-width="1.1"/></svg>
<div class="t" style="left:1796px;top:242.5px;font-size:16px;color:#f0f0f0">Vpp(<span style="color:#ffff00">1</span>)</div>
<div class="t" style="left:1770px;top:268.1px;font-size:20px;color:#fff;">558.61mV</div>
<svg style="left:1885px;top:273px" width="14" height="9"><path d="M0.5 0.5 H13.5 L7 8 Z" fill="#fff"/></svg>
<div class="a" style="left:1766px;top:296px;width:90px;height:40px;background:#50595d;border-radius:7px 7px 0 0"></div>
<div class="a" style="left:1766px;top:325px;width:142px;height:28px;background:#50595d;border-radius:0 7px 7px 7px"></div>
<svg style="left:1771px;top:302px" width="21" height="21"><rect x="0.5" y="0.5" width="20" height="20" fill="#2c353b" stroke="#747e83" stroke-width="1"/><path d="M3.5 13.7 H8.6 V2.8 H14.3 V13.7 H19" fill="none" stroke="#d0d0d0" stroke-width="1.2"/><path d="M2.7 3 V18.5" stroke="#3cb878" stroke-width="1.1"/></svg>
<div class="t" style="left:1796px;top:304.5px;font-size:16px;color:#f0f0f0">Vtop(<span style="color:#ffff00">1</span>)</div>
<div class="t" style="left:1770px;top:330.1px;font-size:20px;color:#fff;">167.75mV</div>
<svg style="left:1885px;top:335px" width="14" height="9"><path d="M0.5 0.5 H13.5 L7 8 Z" fill="#fff"/></svg>
<div class="a" style="left:1766px;top:358px;width:101px;height:40px;background:#50595d;border-radius:7px 7px 0 0"></div>
<div class="a" style="left:1766px;top:387px;width:142px;height:28px;background:#50595d;border-radius:0 7px 7px 7px"></div>
<svg style="left:1771px;top:364px" width="21" height="21"><rect x="0.5" y="0.5" width="20" height="20" fill="#2c353b" stroke="#747e83" stroke-width="1"/><path d="M2 14 H4 V3 H9 V14 H11.5 V3 H16.5 V14 H19" fill="none" stroke="#d0d0d0" stroke-width="1.2"/><path d="M2.7 3 V18.5" stroke="#3cb878" stroke-width="1.1"/></svg>
<div class="t" style="left:1796px;top:366.5px;font-size:16px;color:#f0f0f0">Period(<span style="color:#ffff00">1</span>)</div>
<div class="t" style="left:1770px;top:392.1px;font-size:20px;color:#fff;">5.3560ns</div>
<svg style="left:1885px;top:397px" width="14" height="9"><path d="M0.5 0.5 H13.5 L7 8 Z" fill="#fff"/></svg>
<div class="a" style="left:1766px;top:420px;width:87px;height:40px;background:#50595d;border-radius:7px 7px 0 0"></div>
<div class="a" style="left:1766px;top:449px;width:142px;height:28px;background:#50595d;border-radius:0 7px 7px 7px"></div>
<svg style="left:1771px;top:426px" width="21" height="21"><rect x="0.5" y="0.5" width="20" height="20" fill="#2c353b" stroke="#747e83" stroke-width="1"/><path d="M2 14 H4 V3 H9 V14 H11.5 V3 H16.5 V14 H19" fill="none" stroke="#d0d0d0" stroke-width="1.2"/><path d="M2.7 3 V18.5" stroke="#3cb878" stroke-width="1.1"/></svg>
<div class="t" style="left:1796px;top:428.5px;font-size:16px;color:#f0f0f0">Freq(<span style="color:#ffff00">1</span>)</div>
<div class="t" style="left:1770px;top:454.1px;font-size:20px;color:#fff;">186.70MHz</div>
<svg style="left:1885px;top:459px" width="14" height="9"><path d="M0.5 0.5 H13.5 L7 8 Z" fill="#fff"/></svg>
<div class="a" style="left:1766px;top:482px;width:122px;height:40px;background:#50595d;border-radius:7px 7px 0 0"></div>
<div class="a" style="left:1766px;top:511px;width:142px;height:28px;background:#50595d;border-radius:0 7px 7px 7px"></div>
<svg style="left:1771px;top:488px" width="21" height="21"><rect x="0.5" y="0.5" width="20" height="20" fill="#2c353b" stroke="#747e83" stroke-width="1"/><path d="M3 15 H7 L13 4 H19" fill="none" stroke="#d0d0d0" stroke-width="1.2"/><path d="M2.7 3 V18.5" stroke="#3cb878" stroke-width="1.1"/></svg>
<div class="t" style="left:1796px;top:490.5px;font-size:16px;color:#f0f0f0">RiseTime(<span style="color:#ffff00">1</span>)</div>
<div class="t" style="left:1770px;top:516.1px;font-size:20px;color:#fff;">1.7940ns</div>
<svg style="left:1885px;top:521px" width="14" height="9"><path d="M0.5 0.5 H13.5 L7 8 Z" fill="#fff"/></svg>
<div class="a" style="left:1766px;top:544px;width:106px;height:40px;background:#50595d;border-radius:7px 7px 0 0"></div>
<div class="a" style="left:1766px;top:573px;width:142px;height:28px;background:#50595d;border-radius:0 7px 7px 7px"></div>
<svg style="left:1771px;top:550px" width="21" height="21"><rect x="0.5" y="0.5" width="20" height="20" fill="#2c353b" stroke="#747e83" stroke-width="1"/><path d="M3.5 13.7 H8.6 V2.8 H14.3 V13.7 H19" fill="none" stroke="#d0d0d0" stroke-width="1.2"/><path d="M2.7 3 V18.5" stroke="#3cb878" stroke-width="1.1"/></svg>
<div class="t" style="left:1796px;top:552.5px;font-size:16px;color:#f0f0f0">+Width(<span style="color:#ffff00">1</span>)</div>
<div class="t" style="left:1770px;top:578.1px;font-size:20px;color:#fff;">2.7040ns</div>
<svg style="left:1885px;top:583px" width="14" height="9"><path d="M0.5 0.5 H13.5 L7 8 Z" fill="#fff"/></svg>
<div class="a" style="left:1766px;top:606px;width:98px;height:40px;background:#50595d;border-radius:7px 7px 0 0"></div>
<div class="a" style="left:1766px;top:635px;width:142px;height:28px;background:#50595d;border-radius:0 7px 7px 7px"></div>
<svg style="left:1771px;top:612px" width="21" height="21"><rect x="0.5" y="0.5" width="20" height="20" fill="#2c353b" stroke="#747e83" stroke-width="1"/><path d="M2 10 C5 -1 8 -1 10.5 10 S16 21 19 10" fill="none" stroke="#d0d0d0" stroke-width="1.2"/><path d="M2.7 3 V18.5" stroke="#3cb878" stroke-width="1.1"/></svg>
<div class="t" style="left:1796px;top:614.5px;font-size:16px;color:#f0f0f0">VRMS(<span style="color:#ffff00">1</span>)</div>
<div class="t" style="left:1770px;top:640.1px;font-size:20px;color:#fff;">215.09mV</div>
<svg style="left:1885px;top:645px" width="14" height="9"><path d="M0.5 0.5 H13.5 L7 8 Z" fill="#fff"/></svg>
<div class="a" style="left:4px;top:988px;width:76px;height:88px;background:#000;border-radius:8px"></div>
<div class="a" style="left:7px;top:991px;width:70px;height:82px;background:linear-gradient(#0059a3,#000c14);border-radius:6px"></div>
<div class="a" style="left:22.5px;top:1011px;width:17.5px;height:18.5px;border:1px solid #c8d4dc;border-radius:3px;background:linear-gradient(#1e4a70,#8aa0b0)"></div>
<div class="a" style="left:44px;top:1011px;width:17.5px;height:18.5px;border:1px solid #c8d4dc;border-radius:3px;background:linear-gradient(#1e4a70,#8aa0b0)"></div>
<div class="a" style="left:22.5px;top:1034.5px;width:17.5px;height:18.5px;border:1px solid #c8d4dc;border-radius:3px;background:linear-gradient(#1e4a70,#8aa0b0)"></div>
<div class="a" style="left:44px;top:1034.5px;width:17.5px;height:18.5px;border:1px solid #c8d4dc;border-radius:3px;background:linear-gradient(#1e4a70,#8aa0b0)"></div>
<div class="a" style="left:83px;top:988px;width:649px;height:88px;background:#000;border-radius:8px"></div>
<div class="a" style="left:737px;top:988px;width:515px;height:88px;background:#000;border-radius:8px"></div>
<div class="a" style="left:1256px;top:988px;width:498px;height:88px;background:#000;border-radius:8px"></div>
<div class="a" style="left:1758px;top:988px;width:158px;height:88px;background:#000;border-radius:8px"></div>
<svg style="left:0;top:0" width="1920" height="1080"><path d="M91 1009 V1065 Q91 1072 98 1072 H236 Q243 1072 243 1065 V1007 Q243 1001 237 1001 H163 V997 Q163 992 158 992 H96 Q91 992 91 997 Z" fill="#50595e" stroke="#58636a" stroke-width="2"/><path d="M92 998 Q92 993 97 993 H157 Q162 993 162 998 V1011 H92 Z" fill="#050000"/><rect x="92" y="1011" width="150" height="60" rx="6" fill="#2c353b"/></svg>
<div class="t" style="left:105px;top:995.3px;font-size:15px;color:#ffff00;">CH1</div>
<div class="t" style="left:100.5px;top:1018.8px;font-size:18px;color:#ffff00;">100.00mV/</div>
<div class="t" style="left:100.5px;top:1045.5px;font-size:16px;color:#fff;">134.30mV</div>
<svg style="left:200px;top:1020px" width="18" height="14"><path d="M0 4 H16" stroke="#fff" stroke-width="1.6"/><path d="M0 9.5 H16" stroke="#fff" stroke-width="1.6" stroke-dasharray="3 1.5"/></svg>
<div class="t" style="left:221px;top:1018.8px;font-size:18px;color:#fff;">Ω</div>
<svg style="left:0;top:0" width="1920" height="1080"><path d="M252 1009 V1065 Q252 1072 259 1072 H397 Q404 1072 404 1065 V1007 Q404 1001 398 1001 H324 V997 Q324 992 319 992 H257 Q252 992 252 997 Z" fill="#50595e" stroke="#58636a" stroke-width="2"/><path d="M253 998 Q253 993 258 993 H318 Q323 993 323 998 V1011 H253 Z" fill="#050000"/><rect x="253" y="1011" width="150" height="60" rx="6" fill="#2c353b"/></svg>
<div class="t" style="left:266px;top:995.3px;font-size:15px;color:#e8e8e8;">CH2</div>
<div class="t" style="left:261.5px;top:1018.8px;font-size:18px;color:#8a9499;">100.00mV/</div>
<div class="t" style="left:261.5px;top:1045.5px;font-size:16px;color:#8a9499;">0.00V</div>
<svg style="left:361px;top:1020px" width="18" height="14"><path d="M0 4 H16" stroke="#8a9499" stroke-width="1.6"/><path d="M0 9.5 H16" stroke="#8a9499" stroke-width="1.6" stroke-dasharray="3 1.5"/></svg>
<div class="t" style="left:382px;top:1018.8px;font-size:18px;color:#8a9499;">Ω</div>
<svg style="left:0;top:0" width="1920" height="1080"><path d="M413 1009 V1065 Q413 1072 420 1072 H558 Q565 1072 565 1065 V1007 Q565 1001 559 1001 H485 V997 Q485 992 480 992 H418 Q413 992 413 997 Z" fill="#50595e" stroke="#58636a" stroke-width="2"/><path d="M414 998 Q414 993 419 993 H479 Q484 993 484 998 V1011 H414 Z" fill="#050000"/><rect x="414" y="1011" width="150" height="60" rx="6" fill="#2c353b"/></svg>
<div class="t" style="left:427px;top:995.3px;font-size:15px;color:#e8e8e8;">CH3</div>
<div class="t" style="left:422.5px;top:1018.8px;font-size:18px;color:#8a9499;">100.00mV/</div>
<div class="t" style="left:422.5px;top:1045.5px;font-size:16px;color:#8a9499;">0.00V</div>
<svg style="left:522px;top:1020px" width="18" height="14"><path d="M0 4 H16" stroke="#8a9499" stroke-width="1.6"/><path d="M0 9.5 H16" stroke="#8a9499" stroke-width="1.6" stroke-dasharray="3 1.5"/></svg>
<svg style="left:0;top:0" width="1920" height="1080"><path d="M574 1009 V1065 Q574 1072 581 1072 H719 Q726 1072 726 1065 V1007 Q726 1001 720 1001 H646 V997 Q646 992 641 992 H579 Q574 992 574 997 Z" fill="#50595e" stroke="#58636a" stroke-width="2"/><path d="M575 998 Q575 993 580 993 H640 Q645 993 645 998 V1011 H575 Z" fill="#050000"/><rect x="575" y="1011" width="150" height="60" rx="6" fill="#2c353b"/></svg>
<div class="t" style="left:588px;top:995.3px;font-size:15px;color:#e8e8e8;">CH4</div>
<div class="t" style="left:583.5px;top:1018.8px;font-size:18px;color:#8a9499;">100.00mV/</div>
<div class="t" style="left:583.5px;top:1045.5px;font-size:16px;color:#8a9499;">0.00V</div>
<svg style="left:683px;top:1020px" width="18" height="14"><path d="M0 4 H16" stroke="#8a9499" stroke-width="1.6"/><path d="M0 9.5 H16" stroke="#8a9499" stroke-width="1.6" stroke-dasharray="3 1.5"/></svg>
<svg style="left:0;top:0" width="1920" height="1080"><path d="M745 1007 V1066 Q745 1072 751 1072 H857 Q863 1072 863 1066 V998 Q863 992 857 992 H797 Q791 992 791 998 V1001 H751 Q745 1001 745 1007 Z" fill="#4f8fd8" stroke="#4f8fd8" stroke-width="2"/><path d="M792 999 Q792 993 798 993 H856 Q862 993 862 999 V1011 H792 Z" fill="#000"/><rect x="747" y="1011" width="114" height="59" rx="5" fill="#50595e"/></svg>
<div class="t" style="right:1062px;top:995.3px;font-size:15px;color:#5a9ae0;">Math1</div>
<div class="t" style="left:752px;top:1014.7px;font-size:14.5px;color:#fff;">20.00dBm/</div>
<div class="t" style="left:752px;top:1035.7px;font-size:14.5px;color:#fff;">0.00dBm</div>
<div class="t" style="left:752px;top:1055.7px;font-size:14.5px;color:#fff;">FFT(CH1)</div>
<svg style="left:0;top:0" width="1920" height="1080"><path d="M872 1007 V1066 Q872 1072 878 1072 H984 Q990 1072 990 1066 V998 Q990 992 984 992 H924 Q918 992 918 998 V1001 H878 Q872 1001 872 1007 Z" fill="#6fe6a8" stroke="#6fe6a8" stroke-width="2"/><path d="M919 999 Q919 993 925 993 H983 Q989 993 989 999 V1011 H919 Z" fill="#000"/><rect x="874" y="1011" width="114" height="59" rx="5" fill="#50595e"/></svg>
<div class="t" style="right:935px;top:995.3px;font-size:15px;color:#7ae8b0;">Math2</div>
<div class="t" style="left:879px;top:1014.7px;font-size:14.5px;color:#fff;">500.00mV/</div>
<div class="t" style="left:879px;top:1035.7px;font-size:14.5px;color:#fff;">0.00V</div>
<div class="t" style="left:879px;top:1055.7px;font-size:14.5px;color:#fff;">CH1+CH1</div>
<svg style="left:0;top:0" width="1920" height="1080"><path d="M999 1007 V1066 Q999 1072 1005 1072 H1111 Q1117 1072 1117 1066 V998 Q1117 992 1111 992 H1051 Q1045 992 1045 998 V1001 H1005 Q999 1001 999 1007 Z" fill="#50595e" stroke="#58636a" stroke-width="2"/><path d="M1046 999 Q1046 993 1052 993 H1110 Q1116 993 1116 999 V1011 H1046 Z" fill="#000"/><rect x="1001" y="1011" width="114" height="59" rx="5" fill="#2c353b"/></svg>
<div class="t" style="right:808px;top:995.3px;font-size:15px;color:#b8c0c4;">Math3</div>
<div class="t" style="left:1006px;top:1014.7px;font-size:14.5px;color:#8a9499;">500.00mV/</div>
<div class="t" style="left:1006px;top:1035.7px;font-size:14.5px;color:#8a9499;">0.00V</div>
<div class="t" style="left:1006px;top:1055.7px;font-size:14.5px;color:#8a9499;">+</div>
<svg style="left:0;top:0" width="1920" height="1080"><path d="M1127 1007 V1066 Q1127 1072 1133 1072 H1239 Q1245 1072 1245 1066 V998 Q1245 992 1239 992 H1179 Q1173 992 1173 998 V1001 H1133 Q1127 1001 1127 1007 Z" fill="#50595e" stroke="#58636a" stroke-width="2"/><path d="M1174 999 Q1174 993 1180 993 H1238 Q1244 993 1244 999 V1011 H1174 Z" fill="#000"/><rect x="1129" y="1011" width="114" height="59" rx="5" fill="#2c353b"/></svg>
<div class="t" style="right:680px;top:995.3px;font-size:15px;color:#b8c0c4;">Math4</div>
<div class="t" style="left:1134px;top:1014.7px;font-size:14.5px;color:#8a9499;">500.00mV/</div>
<div class="t" style="left:1134px;top:1035.7px;font-size:14.5px;color:#8a9499;">0.00V</div>
<div class="t" style="left:1134px;top:1055.7px;font-size:14.5px;color:#8a9499;">+</div>
<div class="t" style="left:1537px;width:600px;text-align:center;top:1033.0px;font-size:16px;color:#f0f0f0;letter-spacing:0.3px">09:50:58</div>
<div class="t" style="left:1537px;width:600px;text-align:center;top:1056.0px;font-size:16px;color:#f0f0f0;letter-spacing:0.6px">2013/01/18</div>
<svg style="left:1800px;top:998px" width="90" height="24"><path d="M10 2 V18 M10 14 L6 10 V7 M10 12 L14 8 V6" fill="none" stroke="#ddd" stroke-width="1.2"/><circle cx="10" cy="19" r="1.8" fill="#ddd"/><text x="26" y="19" font-family="Liberation Sans" font-style="italic" font-weight="bold" font-size="16" fill="#e8e8e8">LXI</text><path d="M57 9 H61 L66 4 V20 L61 15 H57 Z" fill="none" stroke="#ddd" stroke-width="1.3"/><path d="M68 9 L74 15 M74 9 L68 15" stroke="#ddd" stroke-width="1"/></svg>
<svg style="left:0;top:0" width="1920" height="1080"><path d="M1166.3 620.6 V644.5 L1172.6 640.6 L1177.5 650 L1181.2 648.2 L1177 638.9 L1184.6 637.3 Z" fill="#000" stroke="#e8e8e8" stroke-width="1.3" stroke-linejoin="miter"/></svg>
</body></html>
